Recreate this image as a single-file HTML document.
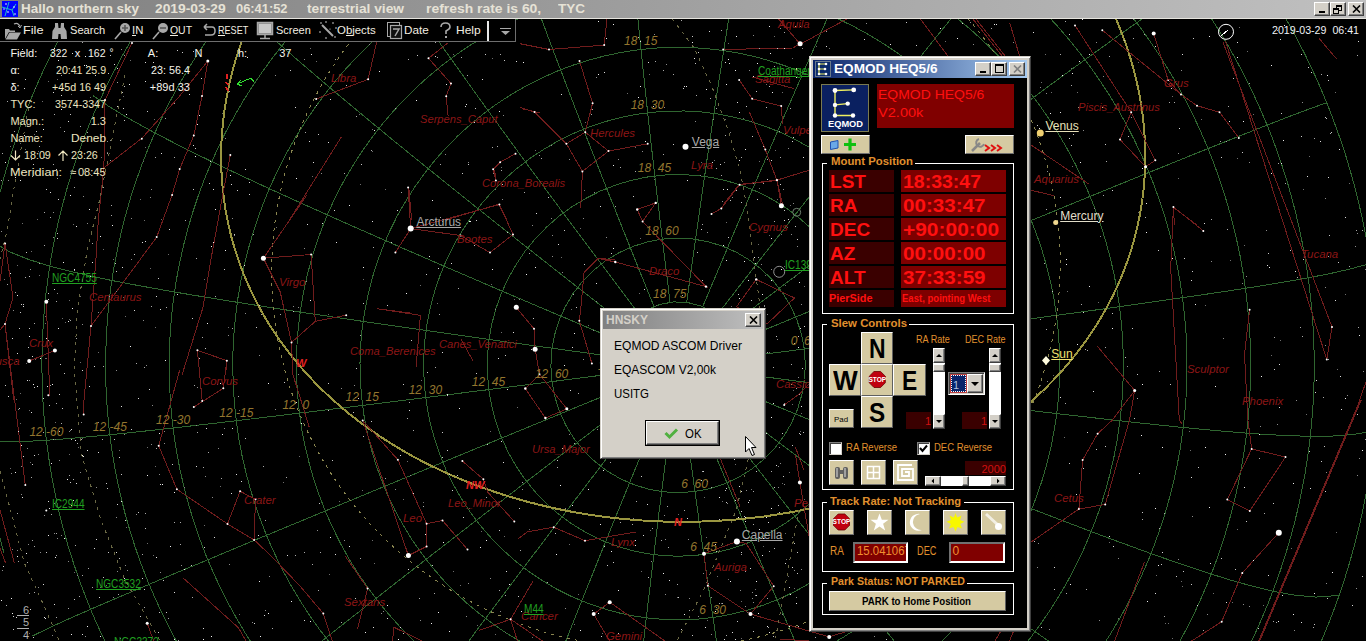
<!DOCTYPE html>
<html><head><meta charset="utf-8"><style>*{margin:0;padding:0;box-sizing:border-box}
html,body{width:1366px;height:641px;overflow:hidden;background:#000;font-family:"Liberation Sans",sans-serif}
.b{position:absolute}
.tx{position:absolute;white-space:pre;line-height:1;transform-origin:0 0}
.wb{position:absolute;background:#d4d0c8;border:1px solid;border-color:#fff #404040 #404040 #fff;box-shadow:inset -1px -1px 0 #808080,inset 1px 1px 0 #d4d0c8}
</style></head><body>
<svg class="b" style="left:0;top:0" width="1366" height="641" shape-rendering="crispEdges"><polyline points="741.2,357.2 741.5,370.9 738.8,384.4 733.3,397.0 725.2,408.1 715.0,417.2 703.0,423.9 689.8,427.9 676.1,429.0 662.4,427.0 649.5,422.2 638.0,414.7 628.3,404.9 620.9,393.3 616.3,380.3 614.5,366.6 615.7,352.9 619.9,339.8 626.8,327.8 636.0,317.6 647.3,309.7 660.0,304.4 673.5,301.9 687.2,302.4 700.5,305.9 712.8,312.1 723.4,320.7 732.0,331.5 738.0,343.9 741.2,357.2" fill="none" stroke="#2f6630" stroke-width="1" />
<polyline points="804.3,349.0 805.3,364.2 804.5,379.5 801.9,394.6 797.5,409.3 791.4,423.3 783.6,436.5 774.3,448.7 763.6,459.6 751.6,469.2 738.6,477.3 724.6,483.8 710.0,488.6 694.9,491.5 679.6,492.6 664.2,491.9 649.1,489.3 634.3,484.8 620.2,478.7 606.9,470.8 594.7,461.4 583.7,450.6 574.0,438.6 565.9,425.4 559.5,411.4 554.8,396.7 551.9,381.6 550.9,366.2 551.7,350.8 554.4,335.6 558.9,320.9 565.2,306.8 573.1,293.5 582.5,281.4 593.4,270.5 605.4,260.9 618.6,252.9 632.6,246.6 647.2,241.9 662.3,239.1 677.6,238.1 692.9,239.0 708.0,241.7 722.7,246.2 736.7,252.4 749.8,260.3 761.9,269.7 772.8,280.4 782.3,292.4 790.3,305.5 796.7,319.4 801.4,333.9 804.3,349.0" fill="none" stroke="#2f6630" stroke-width="1" />
<polyline points="867.3,340.7 868.8,356.7 868.8,372.8 867.5,388.9 864.8,404.8 860.9,420.4 855.6,435.6 849.0,450.3 841.2,464.4 832.3,477.9 822.2,490.5 811.1,502.2 799.1,513.0 786.2,522.7 772.4,531.3 758.0,538.7 743.1,544.8 727.6,549.7 711.8,553.2 695.7,555.4 679.5,556.2 663.3,555.7 647.2,553.7 631.2,550.4 615.7,545.7 600.5,539.8 586.0,532.5 572.0,524.0 558.9,514.4 546.6,503.7 535.3,492.0 525.0,479.3 515.9,465.9 507.9,451.7 501.1,436.8 495.7,421.4 491.6,405.7 488.8,389.6 487.4,373.3 487.4,357.0 488.8,340.8 491.6,324.8 495.8,309.0 501.2,293.7 508.0,278.8 516.0,264.7 525.1,251.2 535.4,238.6 546.7,227.0 558.9,216.3 572.0,206.7 585.9,198.3 600.4,191.0 615.5,185.1 631.0,180.4 646.8,177.1 662.9,175.1 679.1,174.5 695.2,175.3 711.2,177.4 727.0,180.9 742.4,185.7 757.3,191.7 771.7,199.1 785.4,207.5 798.3,217.2 810.4,227.8 821.5,239.5 831.6,252.0 840.6,265.4 848.5,279.4 855.1,294.1 860.5,309.2 864.6,324.8 867.3,340.7" fill="none" stroke="#2f6630" stroke-width="1" />
<polyline points="930.4,332.3 932.0,348.6 932.6,364.9 932.1,381.2 930.5,397.5 927.9,413.7 924.3,429.6 919.7,445.3 914.1,460.7 907.4,475.6 899.9,490.2 891.4,504.2 882.0,517.6 871.8,530.5 860.7,542.6 848.9,554.0 836.4,564.6 823.2,574.4 809.4,583.4 795.1,591.4 780.2,598.5 764.9,604.6 749.2,609.7 733.3,613.8 717.0,616.9 700.6,618.9 684.2,619.8 667.6,619.6 651.1,618.4 634.7,616.1 618.5,612.8 602.6,608.4 586.9,602.9 571.6,596.5 556.8,589.1 542.5,580.7 528.7,571.4 515.6,561.2 503.2,550.2 491.5,538.4 480.6,525.8 470.5,512.6 461.4,498.7 453.1,484.3 445.8,469.3 439.6,453.9 434.3,438.2 430.0,422.1 426.9,405.8 424.8,389.3 423.7,372.7 423.8,356.1 425.0,339.5 427.2,323.0 430.5,306.7 434.8,290.7 440.2,275.0 446.6,259.7 454.0,244.8 462.3,230.5 471.6,216.7 481.7,203.6 492.6,191.2 504.3,179.5 516.7,168.6 529.9,158.5 543.6,149.4 557.9,141.1 572.7,133.8 587.9,127.4 603.5,122.1 619.4,117.8 635.5,114.5 651.8,112.3 668.2,111.1 684.6,111.0 701.0,111.9 717.3,113.9 733.4,117.0 749.3,121.1 764.9,126.2 780.1,132.2 794.9,139.3 809.2,147.3 822.9,156.2 836.1,165.9 848.6,176.5 860.4,187.8 871.4,199.9 881.6,212.6 891.0,226.0 899.5,239.9 907.1,254.4 913.7,269.3 919.4,284.6 924.1,300.3 927.8,316.2 930.4,332.3" fill="none" stroke="#2f6630" stroke-width="1" />
<polyline points="993.5,323.9 995.2,340.4 996.1,357.0 996.1,373.6 995.2,390.2 993.5,406.7 990.9,423.1 987.5,439.4 983.2,455.4 978.0,471.3 972.1,486.8 965.3,502.0 957.8,516.9 949.5,531.3 940.4,545.3 930.6,558.8 920.1,571.8 909.0,584.2 897.2,596.0 884.7,607.2 871.8,617.7 858.2,627.6 844.2,636.7 829.7,645.1 814.7,652.7 799.4,659.5 783.7,665.5 767.7,670.6 751.5,674.9 735.0,678.4 718.4,680.9 701.6,682.6 684.8,683.4 667.9,683.3 651.1,682.3 634.3,680.4 617.7,677.7 601.2,674.0 584.9,669.5 568.8,664.1 553.1,657.9 537.7,650.8 522.7,642.9 508.2,634.3 494.1,624.8 480.5,614.6 467.5,603.8 455.1,592.2 443.3,580.0 432.2,567.1 421.8,553.7 412.1,539.8 403.2,525.3 395.0,510.4 387.7,495.1 381.2,479.4 375.5,463.4 370.7,447.1 366.8,430.5 363.7,413.8 361.6,396.9 360.4,380.0 360.0,363.0 360.6,346.1 362.1,329.1 364.5,312.3 367.8,295.7 371.9,279.2 376.9,263.0 382.8,247.2 389.5,231.6 397.0,216.4 405.4,201.7 414.5,187.4 424.3,173.7 434.8,160.4 446.0,147.8 457.9,135.8 470.4,124.5 483.4,113.8 497.0,103.8 511.1,94.6 525.7,86.2 540.7,78.5 556.0,71.6 571.7,65.6 587.7,60.4 603.9,56.1 620.3,52.6 636.8,50.0 653.5,48.2 670.2,47.4 686.9,47.4 703.6,48.3 720.2,50.1 736.7,52.7 753.0,56.2 769.1,60.6 785.0,65.8 800.5,71.8 815.7,78.6 830.6,86.2 845.0,94.6 858.9,103.7 872.3,113.5 885.2,124.0 897.5,135.1 909.3,146.9 920.4,159.3 930.8,172.2 940.5,185.6 949.5,199.6 957.8,214.0 965.3,228.8 972.1,243.9 978.0,259.4 983.1,275.2 987.4,291.2 990.9,307.5 993.5,323.9" fill="none" stroke="#2f6630" stroke-width="1" />
<polyline points="1056.5,315.3 1058.3,331.9 1059.4,348.5 1059.8,365.1 1059.4,381.8 1058.4,398.4 1056.6,415.0 1054.0,431.4 1050.8,447.8 1046.8,464.0 1042.2,480.0 1036.8,495.8 1030.8,511.4 1024.1,526.7 1016.7,541.6 1008.6,556.3 1000.0,570.6 990.7,584.5 980.7,598.0 970.3,611.1 959.2,623.6 947.6,635.7 935.4,647.3 922.8,658.4 909.7,668.9 896.1,678.8 882.0,688.1 867.6,696.7 852.8,704.8 837.7,712.2 822.2,718.9 806.4,724.9 790.4,730.2 774.1,734.8 757.7,738.7 741.0,741.9 724.3,744.3 707.4,746.0 690.5,746.9 673.5,747.1 656.5,746.5 639.6,745.2 622.7,743.1 606.0,740.2 589.3,736.6 572.9,732.3 556.6,727.2 540.5,721.4 524.8,714.9 509.3,707.7 494.2,699.8 479.4,691.3 465.0,682.0 451.0,672.2 437.5,661.7 424.5,650.6 411.9,639.0 399.9,626.7 388.5,614.0 377.6,600.8 367.4,587.0 357.7,572.9 348.7,558.3 340.4,543.3 332.8,527.9 325.8,512.3 319.6,496.3 314.0,480.0 309.3,463.6 305.2,446.9 301.9,430.1 299.4,413.1 297.7,396.1 296.7,379.0 296.4,361.8 297.0,344.7 298.3,327.6 300.4,310.6 303.2,293.8 306.8,277.0 311.1,260.5 316.2,244.1 322.0,228.1 328.4,212.3 335.6,196.8 343.5,181.6 352.1,166.9 361.3,152.5 371.1,138.6 381.5,125.1 392.5,112.1 404.1,99.7 416.2,87.7 428.8,76.3 441.9,65.5 455.4,55.3 469.4,45.7 483.8,36.8 498.6,28.5 513.7,20.9 529.1,13.9 544.8,7.7 560.8,2.1 576.9,-2.7 593.3,-6.8 609.8,-10.2 626.4,-12.8 643.2,-14.7 659.9,-15.9 676.8,-16.3 693.6,-16.0 710.3,-15.0 727.0,-13.2 743.6,-10.7 760.0,-7.4 776.3,-3.5 792.4,1.2 808.2,6.5 823.8,12.6 839.1,19.3 854.1,26.7 868.8,34.7 883.0,43.4 896.9,52.6 910.4,62.5 923.4,72.9 935.9,83.9 948.0,95.4 959.5,107.5 970.5,120.0 980.9,133.0 990.7,146.4 1000.0,160.2 1008.6,174.5 1016.6,189.0 1024.0,204.0 1030.7,219.2 1036.7,234.7 1042.1,250.4 1046.7,266.4 1050.7,282.6 1054.0,298.9 1056.5,315.3" fill="none" stroke="#2f6630" stroke-width="1" />
<polyline points="1119.5,306.6 1121.4,323.3 1122.7,340.0 1123.3,356.7 1123.3,373.5 1122.7,390.2 1121.5,406.9 1119.6,423.6 1117.1,440.2 1114.0,456.6 1110.2,473.0 1105.9,489.2 1100.9,505.3 1095.3,521.1 1089.1,536.7 1082.4,552.2 1075.0,567.3 1067.1,582.2 1058.6,596.7 1049.6,610.9 1040.1,624.8 1030.0,638.4 1019.4,651.5 1008.3,664.3 996.7,676.6 984.6,688.4 972.1,699.9 959.2,710.8 945.9,721.3 932.1,731.2 918.0,740.6 903.5,749.5 888.7,757.8 873.5,765.6 858.1,772.7 842.4,779.3 826.4,785.3 810.2,790.7 793.8,795.4 777.2,799.6 760.5,803.1 743.6,805.9 726.6,808.1 709.5,809.6 692.4,810.5 675.3,810.7 658.1,810.3 640.9,809.2 623.8,807.4 606.8,805.0 589.8,801.9 573.0,798.1 556.3,793.7 539.8,788.7 523.5,783.0 507.4,776.7 491.6,769.8 476.0,762.2 460.8,754.1 445.8,745.3 431.2,736.0 417.0,726.1 403.2,715.7 389.7,704.7 376.7,693.2 364.2,681.2 352.1,668.7 340.5,655.8 329.5,642.4 318.9,628.6 308.9,614.4 299.5,599.8 290.6,584.8 282.3,569.5 274.7,553.9 267.6,538.0 261.2,521.8 255.4,505.4 250.2,488.8 245.8,472.0 241.9,455.0 238.7,437.9 236.3,420.7 234.4,403.4 233.3,386.1 232.8,368.7 233.0,351.3 233.9,334.0 235.5,316.7 237.7,299.4 240.6,282.3 244.2,265.4 248.4,248.5 253.3,231.9 258.8,215.5 264.9,199.3 271.7,183.3 279.1,167.7 287.0,152.4 295.6,137.3 304.7,122.7 314.4,108.4 324.6,94.5 335.4,81.0 346.6,68.0 358.4,55.4 370.6,43.3 383.2,31.6 396.3,20.5 409.8,9.9 423.7,-0.2 438.0,-9.7 452.6,-18.7 467.5,-27.0 482.8,-34.8 498.3,-42.1 514.0,-48.6 530.0,-54.6 546.2,-60.0 562.6,-64.7 579.1,-68.8 595.8,-72.3 612.5,-75.1 629.4,-77.3 646.3,-78.8 663.3,-79.7 680.2,-80.0 697.2,-79.6 714.1,-78.5 730.9,-76.8 747.6,-74.5 764.3,-71.5 780.8,-68.0 797.1,-63.8 813.3,-58.9 829.3,-53.5 845.0,-47.5 860.5,-40.9 875.7,-33.7 890.7,-25.9 905.3,-17.6 919.6,-8.8 933.5,0.6 947.1,10.5 960.3,20.9 973.1,31.7 985.4,43.1 997.3,54.9 1008.8,67.1 1019.8,79.8 1030.3,92.8 1040.3,106.3 1049.8,120.1 1058.7,134.2 1067.1,148.7 1075.0,163.5 1082.3,178.5 1089.0,193.8 1095.2,209.4 1100.8,225.2 1105.7,241.2 1110.1,257.3 1113.9,273.6 1117.0,290.1 1119.5,306.6" fill="none" stroke="#2f6630" stroke-width="1" />
<polyline points="1182.5,297.7 1184.4,314.3 1185.9,330.9 1186.7,347.6 1187.0,364.3 1186.8,381.0 1186.0,397.7 1184.7,414.3 1182.8,430.9 1180.4,447.5 1177.4,463.9 1173.9,480.3 1169.8,496.6 1165.3,512.7 1160.2,528.6 1154.5,544.4 1148.4,560.0 1141.7,575.4 1134.5,590.6 1126.8,605.6 1118.6,620.3 1110.0,634.7 1100.8,648.8 1091.2,662.7 1081.1,676.2 1070.6,689.4 1059.7,702.2 1048.3,714.7 1036.5,726.8 1024.3,738.5 1011.7,749.8 998.7,760.7 985.3,771.2 971.6,781.2 957.6,790.8 943.2,799.9 928.5,808.5 913.6,816.6 898.3,824.2 882.8,831.4 867.1,838.0 851.1,844.1 835.0,849.6 818.6,854.6 802.0,859.0 785.4,862.9 768.5,866.3 751.6,869.0 734.5,871.2 717.4,872.8 700.2,873.9 683.0,874.3 665.7,874.2 648.5,873.5 631.3,872.2 614.1,870.3 597.0,867.8 579.9,864.8 563.0,861.2 546.2,856.9 529.5,852.2 513.0,846.8 496.6,840.9 480.5,834.4 464.6,827.4 448.9,819.8 433.5,811.7 418.4,803.1 403.5,793.9 389.0,784.2 374.8,774.1 361.0,763.4 347.5,752.3 334.4,740.7 321.7,728.7 309.4,716.2 297.6,703.3 286.2,690.0 275.3,676.4 264.8,662.3 254.8,647.9 245.3,633.2 236.4,618.1 227.9,602.7 220.0,587.1 212.7,571.2 205.8,555.0 199.6,538.6 193.9,522.0 188.8,505.3 184.3,488.3 180.3,471.2 177.0,454.0 174.2,436.7 172.0,419.3 170.5,401.8 169.5,384.3 169.2,366.8 169.4,349.3 170.3,331.8 171.7,314.4 173.8,297.0 176.4,279.7 179.7,262.5 183.5,245.5 187.9,228.6 192.9,211.9 198.4,195.3 204.5,179.0 211.2,162.9 218.4,147.0 226.1,131.4 234.4,116.1 243.1,101.1 252.4,86.4 262.2,72.0 272.4,58.0 283.1,44.4 294.3,31.1 305.9,18.3 317.9,5.8 330.3,-6.2 343.1,-17.8 356.3,-28.9 369.8,-39.6 383.7,-49.8 397.9,-59.5 412.4,-68.8 427.2,-77.5 442.3,-85.7 457.7,-93.4 473.2,-100.6 489.0,-107.2 505.0,-113.3 521.2,-118.8 537.5,-123.8 554.0,-128.3 570.6,-132.1 587.4,-135.5 604.2,-138.2 621.0,-140.4 638.0,-142.0 654.9,-143.1 671.9,-143.6 688.8,-143.5 705.8,-142.8 722.7,-141.6 739.5,-139.9 756.3,-137.6 772.9,-134.7 789.4,-131.3 805.8,-127.3 822.1,-122.8 838.2,-117.8 854.1,-112.2 869.8,-106.1 885.2,-99.5 900.5,-92.4 915.4,-84.8 930.2,-76.8 944.6,-68.2 958.7,-59.2 972.6,-49.7 986.1,-39.8 999.2,-29.5 1012.0,-18.7 1024.5,-7.5 1036.5,4.1 1048.2,16.1 1059.5,28.4 1070.3,41.1 1080.8,54.2 1090.8,67.5 1100.3,81.2 1109.4,95.2 1118.0,109.5 1126.2,124.1 1133.8,138.9 1141.0,154.0 1147.7,169.2 1153.9,184.7 1159.5,200.4 1164.7,216.3 1169.3,232.3 1173.4,248.5 1177.0,264.8 1180.0,281.2 1182.5,297.7" fill="none" stroke="#2f6630" stroke-width="1" />
<polyline points="1245.4,288.3 1247.4,304.8 1248.9,321.4 1250.0,338.0 1250.5,354.7 1250.6,371.4 1250.2,388.0 1249.3,404.7 1247.9,421.3 1246.0,437.9 1243.7,454.5 1240.8,470.9 1237.5,487.3 1233.7,503.6 1229.4,519.8 1224.7,535.9 1219.5,551.8 1213.8,567.6 1207.6,583.2 1201.0,598.6 1194.0,613.9 1186.4,628.9 1178.5,643.7 1170.1,658.3 1161.3,672.7 1152.0,686.8 1142.3,700.6 1132.2,714.1 1121.8,727.4 1110.9,740.3 1099.6,753.0 1087.9,765.3 1075.9,777.2 1063.5,788.8 1050.8,800.1 1037.7,811.0 1024.3,821.5 1010.6,831.6 996.6,841.3 982.2,850.6 967.6,859.4 952.7,867.8 937.6,875.8 922.2,883.4 906.6,890.5 890.7,897.1 874.7,903.2 858.4,908.9 842.0,914.1 825.4,918.7 808.6,922.9 791.7,926.6 774.7,929.8 757.6,932.5 740.4,934.6 723.1,936.2 705.8,937.3 688.4,937.9 671.0,938.0 653.6,937.5 636.2,936.5 618.8,934.9 601.5,932.8 584.2,930.2 567.0,927.1 549.8,923.4 532.8,919.2 515.9,914.5 499.1,909.3 482.5,903.5 466.1,897.3 449.8,890.5 433.8,883.2 417.9,875.4 402.3,867.2 387.0,858.4 371.9,849.2 357.1,839.5 342.6,829.4 328.4,818.8 314.6,807.7 301.1,796.3 287.9,784.4 275.1,772.1 262.7,759.4 250.7,746.3 239.0,732.9 227.9,719.0 217.1,704.9 206.8,690.4 196.9,675.6 187.5,660.5 178.5,645.1 170.1,629.4 162.1,613.5 154.7,597.3 147.7,580.9 141.2,564.3 135.3,547.5 129.9,530.5 125.0,513.4 120.7,496.1 116.9,478.7 113.6,461.2 110.9,443.6 108.8,425.9 107.2,408.2 106.1,390.5 105.6,372.7 105.7,354.9 106.3,337.1 107.4,319.4 109.1,301.7 111.3,284.1 114.1,266.6 117.5,249.2 121.3,231.9 125.7,214.7 130.6,197.7 136.1,180.9 142.0,164.2 148.5,147.8 155.5,131.5 162.9,115.5 170.8,99.8 179.2,84.3 188.1,69.1 197.5,54.2 207.2,39.6 217.4,25.3 228.1,11.3 239.1,-2.3 250.6,-15.5 262.4,-28.4 274.6,-40.9 287.2,-53.0 300.1,-64.8 313.4,-76.1 327.0,-87.0 340.9,-97.4 355.1,-107.4 369.6,-117.0 384.3,-126.1 399.3,-134.8 414.6,-143.0 430.0,-150.7 445.7,-158.0 461.6,-164.7 477.7,-171.0 493.9,-176.8 510.3,-182.1 526.8,-186.9 543.4,-191.2 560.1,-195.0 576.9,-198.2 593.8,-201.0 610.8,-203.3 627.8,-205.0 644.8,-206.3 661.8,-207.0 678.9,-207.2 695.9,-207.0 712.9,-206.2 729.8,-204.9 746.7,-203.1 763.5,-200.8 780.2,-198.1 796.8,-194.8 813.3,-191.0 829.7,-186.8 845.9,-182.1 861.9,-176.9 877.8,-171.3 893.5,-165.1 909.0,-158.6 924.3,-151.6 939.4,-144.1 954.2,-136.2 968.8,-127.9 983.1,-119.2 997.2,-110.1 1010.9,-100.5 1024.4,-90.6 1037.6,-80.3 1050.4,-69.6 1063.0,-58.5 1075.2,-47.1 1087.1,-35.3 1098.6,-23.2 1109.7,-10.8 1120.5,1.9 1130.9,15.0 1140.9,28.3 1150.5,41.9 1159.7,55.8 1168.5,69.9 1176.9,84.3 1184.9,99.0 1192.4,113.8 1199.5,128.9 1206.2,144.1 1212.4,159.6 1218.1,175.2 1223.4,191.0 1228.3,206.9 1232.6,222.9 1236.5,239.1 1240.0,255.4 1242.9,271.8 1245.4,288.3" fill="none" stroke="#2f6630" stroke-width="1" />
<polyline points="1308.2,277.8 1310.2,294.1 1311.9,310.4 1313.1,326.8 1313.9,343.2 1314.2,359.6 1314.2,376.1 1313.7,392.5 1312.8,409.0 1311.4,425.4 1309.7,441.8 1307.5,458.1 1304.9,474.4 1301.8,490.6 1298.4,506.7 1294.5,522.8 1290.2,538.8 1285.5,554.6 1280.4,570.4 1274.8,586.0 1268.9,601.5 1262.5,616.8 1255.8,632.0 1248.6,647.0 1241.0,661.8 1233.1,676.5 1224.7,690.9 1216.0,705.2 1206.9,719.2 1197.4,732.9 1187.6,746.5 1177.4,759.8 1166.8,772.8 1155.9,785.6 1144.6,798.1 1133.0,810.3 1121.0,822.2 1108.8,833.8 1096.2,845.0 1083.3,856.0 1070.1,866.6 1056.6,876.9 1042.8,886.8 1028.7,896.3 1014.4,905.5 999.8,914.4 984.9,922.8 969.9,930.8 954.5,938.5 939.0,945.7 923.2,952.6 907.3,959.0 891.2,964.9 874.8,970.5 858.4,975.6 841.7,980.3 824.9,984.5 808.0,988.3 791.0,991.6 773.8,994.4 756.6,996.8 739.3,998.7 721.9,1000.2 704.4,1001.1 686.9,1001.6 669.4,1001.6 651.9,1001.1 634.4,1000.1 616.8,998.7 599.3,996.7 581.9,994.3 564.4,991.4 547.1,988.0 529.8,984.1 512.7,979.7 495.6,974.9 478.7,969.5 461.8,963.7 445.2,957.4 428.7,950.7 412.4,943.5 396.3,935.8 380.4,927.6 364.7,919.0 349.2,910.0 334.0,900.5 319.0,890.6 304.4,880.2 290.0,869.4 275.9,858.3 262.1,846.7 248.6,834.7 235.5,822.3 222.7,809.6 210.3,796.5 198.2,783.0 186.6,769.2 175.3,755.1 164.4,740.6 154.0,725.9 143.9,710.8 134.3,695.5 125.1,679.8 116.4,664.0 108.1,647.8 100.3,631.5 92.9,614.9 86.1,598.1 79.7,581.1 73.8,564.0 68.3,546.7 63.4,529.2 59.0,511.6 55.1,493.9 51.7,476.1 48.8,458.2 46.4,440.3 44.5,422.2 43.1,404.2 42.3,386.1 41.9,368.0 42.1,349.9 42.8,331.9 44.0,313.8 45.7,295.9 48.0,278.0 50.7,260.1 53.9,242.4 57.6,224.8 61.9,207.3 66.6,189.9 71.8,172.8 77.4,155.7 83.6,138.9 90.2,122.2 97.3,105.8 104.8,89.6 112.8,73.6 121.2,57.8 130.0,42.3 139.2,27.1 148.9,12.2 159.0,-2.4 169.4,-16.8 180.3,-30.8 191.5,-44.5 203.0,-57.9 215.0,-70.9 227.2,-83.6 239.8,-95.9 252.8,-107.8 266.0,-119.4 279.5,-130.6 293.3,-141.4 307.4,-151.8 321.7,-161.7 336.3,-171.3 351.2,-180.5 366.2,-189.2 381.5,-197.5 396.9,-205.4 412.6,-212.9 428.4,-219.9 444.4,-226.4 460.6,-232.6 476.8,-238.2 493.2,-243.5 509.8,-248.2 526.4,-252.6 543.1,-256.4 559.9,-259.8 576.7,-262.8 593.6,-265.3 610.5,-267.3 627.5,-268.9 644.5,-270.0 661.4,-270.7 678.4,-270.9 695.4,-270.7 712.3,-270.0 729.1,-268.8 745.9,-267.3 762.7,-265.2 779.3,-262.8 795.9,-259.9 812.4,-256.5 828.7,-252.8 845.0,-248.6 861.1,-244.0 877.0,-239.0 892.9,-233.5 908.5,-227.7 924.0,-221.4 939.2,-214.8 954.3,-207.7 969.2,-200.3 983.9,-192.5 998.3,-184.4 1012.6,-175.8 1026.6,-166.9 1040.3,-157.7 1053.8,-148.1 1067.0,-138.1 1079.9,-127.8 1092.6,-117.2 1105.0,-106.3 1117.1,-95.1 1128.8,-83.6 1140.3,-71.7 1151.5,-59.6 1162.3,-47.2 1172.8,-34.6 1183.0,-21.7 1192.8,-8.5 1202.3,4.9 1211.4,18.6 1220.2,32.5 1228.6,46.6 1236.6,60.9 1244.3,75.4 1251.6,90.1 1258.5,105.0 1265.0,120.0 1271.2,135.2 1276.9,150.6 1282.2,166.1 1287.2,181.7 1291.7,197.5 1295.8,213.4 1299.5,229.3 1302.8,245.4 1305.7,261.6 1308.2,277.8" fill="none" stroke="#2f6630" stroke-width="1" />
<polyline points="1370.4,263.4 1372.5,279.0 1374.3,294.7 1375.7,310.5 1376.8,326.2 1377.5,342.1 1377.9,357.9 1377.8,373.7 1377.5,389.6 1376.8,405.4 1375.7,421.3 1374.2,437.1 1372.4,452.9 1370.3,468.7 1367.7,484.4 1364.8,500.1 1361.6,515.7 1358.0,531.3 1354.0,546.8 1349.7,562.3 1345.0,577.6 1340.0,592.9 1334.6,608.0 1328.8,623.0 1322.7,638.0 1316.3,652.8 1309.5,667.5 1302.3,682.0 1294.8,696.4 1287.0,710.6 1278.8,724.7 1270.3,738.6 1261.4,752.3 1252.2,765.8 1242.7,779.1 1232.8,792.3 1222.6,805.2 1212.1,817.9 1201.3,830.4 1190.2,842.6 1178.7,854.6 1167.0,866.3 1155.0,877.8 1142.6,889.0 1130.0,900.0 1117.1,910.6 1103.9,921.0 1090.4,931.1 1076.7,940.8 1062.7,950.3 1048.4,959.4 1033.9,968.2 1019.2,976.7 1004.2,984.8 989.0,992.6 973.5,1000.0 957.9,1007.1 942.0,1013.8 926.0,1020.1 909.7,1026.0 893.3,1031.5 876.7,1036.7 859.9,1041.4 843.0,1045.7 826.0,1049.6 808.8,1053.1 791.4,1056.2 774.0,1058.8 756.5,1061.0 738.8,1062.8 721.1,1064.1 703.3,1064.9 685.5,1065.4 667.6,1065.3 649.7,1064.8 631.7,1063.8 613.8,1062.4 595.8,1060.5 577.9,1058.1 559.9,1055.3 542.0,1052.0 524.2,1048.2 506.4,1044.0 488.8,1039.2 471.2,1034.0 453.7,1028.4 436.3,1022.2 419.0,1015.6 402.0,1008.5 385.0,1001.0 368.2,993.0 351.7,984.5 335.3,975.6 319.1,966.2 303.2,956.4 287.5,946.1 272.1,935.4 256.9,924.3 242.0,912.7 227.4,900.8 213.1,888.4" fill="none" stroke="#2f6630" stroke-width="1" />
<polyline points="3.9,552.9 -0.9,534.4 -5.3,515.8 -9.2,497.0 -12.5,478.2 -15.3,459.2 -17.7,440.3 -19.4,421.2 -20.7,402.2 -21.5,383.1 -21.7,364.1 -21.4,345.0 -20.6,326.0 -19.3,307.0 -17.4,288.1 -15.1,269.3 -12.2,250.6 -8.9,232.0 -5.1,213.5 -0.7,195.1 4.1,176.9 9.4,158.9 15.2,141.0 21.4,123.4 28.1,105.9 35.3,88.6 42.9,71.6 50.9,54.8 59.3,38.3 68.2,22.0 77.5,6.0 87.2,-9.7 97.2,-25.1 107.7,-40.3 118.5,-55.1 129.7,-69.6 141.2,-83.7 153.1,-97.6 165.3,-111.0 177.8,-124.2 190.6,-136.9 203.7,-149.3 217.1,-161.4 230.8,-173.1 244.7,-184.3 258.9,-195.2 273.3,-205.7 287.9,-215.8 302.8,-225.5 317.9,-234.9 333.1,-243.8 348.6,-252.2 364.2,-260.3 380.0,-268.0 395.9,-275.2 411.9,-282.1 428.1,-288.5 444.4,-294.5 460.8,-300.1 477.3,-305.2 493.9,-310.0 510.5,-314.3 527.2,-318.2 544.0,-321.7 560.8,-324.8 577.6,-327.4 594.5,-329.6 611.3,-331.5 628.2,-332.9 645.1,-333.9 661.9,-334.5 678.7,-334.6 695.5,-334.4 712.2,-333.8 728.9,-332.8 745.5,-331.4 762.0,-329.6 778.5,-327.4 794.8,-324.8 811.1,-321.8 827.3,-318.5 843.3,-314.8 859.2,-310.7 875.0,-306.3 890.7,-301.5 906.2,-296.3 921.6,-290.8 936.8,-285.0 951.8,-278.8 966.7,-272.3 981.4,-265.4 995.9,-258.2 1010.2,-250.7 1024.4,-242.9 1038.3,-234.7 1052.0,-226.3 1065.5,-217.5 1078.7,-208.5 1091.8,-199.1 1104.6,-189.5 1117.2,-179.6 1129.5,-169.4 1141.6,-159.0 1153.4,-148.3 1165.0,-137.3 1176.3,-126.1 1187.3,-114.7 1198.1,-103.0 1208.6,-91.1 1218.8,-78.9 1228.7,-66.6 1238.3,-54.0 1247.7,-41.2 1256.7,-28.2 1265.4,-15.0 1273.9,-1.7 1282.0,11.9 1289.8,25.6 1297.3,39.5 1304.5,53.5 1311.4,67.7 1318.0,82.1 1324.2,96.6 1330.1,111.2 1335.6,126.0 1340.9,140.8 1345.8,155.8 1350.3,170.9 1354.5,186.1 1358.4,201.4 1361.9,216.8 1365.1,232.2 1367.9,247.8 1370.4,263.4" fill="none" stroke="#2f6630" stroke-width="1" />
<polyline points="741.2,357.2 762.2,354.5 783.2,351.7 804.3,349.0 825.3,346.2 846.3,343.4 867.3,340.7 888.4,337.9 909.4,335.1 930.4,332.3 951.4,329.5 972.4,326.7 993.5,323.9 1014.5,321.0 1035.5,318.2 1056.5,315.3 1077.5,312.5 1098.5,309.6 1119.5,306.6 1140.5,303.7 1161.5,300.7 1182.5,297.7 1203.5,294.6 1224.5,291.5 1245.4,288.3 1266.4,285.0 1287.3,281.5 1308.2,277.8 1329.0,273.8 1349.8,269.1 1370.4,263.4" fill="none" stroke="#2f6630" stroke-width="1" />
<polyline points="741.2,373.8 762.2,376.5 783.2,379.3 804.2,382.1 825.3,384.8 846.3,387.5 867.3,390.2 888.4,392.9 909.4,395.5 930.4,398.2 951.5,400.8 972.5,403.4 993.6,406.0 1014.6,408.6 1035.7,411.1 1056.7,413.6 1077.8,416.0 1098.9,418.4 1120.0,420.8 1141.0,423.1 1162.1,425.3 1183.2,427.5 1204.3,429.5 1225.5,431.4 1246.6,433.1 1267.8,434.6 1289.0,435.7 1310.3,436.3 1331.7,436.1 1353.2,434.6 1374.9,430.5" fill="none" stroke="#2f6630" stroke-width="1" />
<polyline points="736.9,389.8 756.5,397.9 776.1,406.0 795.7,414.0 815.3,422.1 834.9,430.1 854.6,438.1 874.2,446.1 893.9,454.0 913.5,461.9 933.2,469.8 952.9,477.7 972.6,485.5 992.3,493.3 1012.1,501.1 1031.8,508.8 1051.6,516.4 1071.4,524.0 1091.3,531.6 1111.1,539.0 1131.0,546.3 1151.0,553.6 1171.0,560.6 1191.1,567.5 1211.3,574.1 1231.6,580.4 1252.1,586.1 1272.9,591.2 1294.1,595.1 1316.0,597.1 1339.1,595.4" fill="none" stroke="#2f6630" stroke-width="1" />
<polyline points="728.5,404.1 745.4,417.0 762.3,429.9 779.1,442.7 796.0,455.5 812.9,468.3 829.9,481.1 846.8,493.9 863.8,506.6 880.8,519.3 897.8,531.9 914.8,544.6 931.9,557.2 949.0,569.7 966.1,582.2 983.3,594.7 1000.5,607.1 1017.8,619.4 1035.1,631.7 1052.5,643.8 1069.9,655.9 1087.5,667.8 1105.2,679.5 1123.0,691.0 1141.1,702.3 1159.4,713.1 1178.1,723.4 1197.4,732.9 1217.6,741.2 1239.2,747.2 1263.6,748.9" fill="none" stroke="#2f6630" stroke-width="1" />
<polyline points="716.8,415.9 729.8,432.7 742.7,449.4 755.7,466.2 768.7,482.9 781.8,499.7 794.9,516.4 808.0,533.0 821.1,549.7 834.3,566.3 847.4,582.9 860.7,599.5 874.0,616.0 887.3,632.5 900.7,649.0 914.1,665.4 927.6,681.8 941.1,698.1 954.8,714.3 968.6,730.5 982.4,746.6 996.5,762.5 1010.7,778.3 1025.2,793.9 1039.9,809.2 1055.1,824.2 1070.9,838.6 1087.6,852.4 1105.6,864.9 1126.0,875.3 1150.9,881.6" fill="none" stroke="#2f6630" stroke-width="1" />
<polyline points="702.4,424.2 710.6,443.7 718.8,463.3 727.0,482.8 735.3,502.4 743.6,521.9 751.9,541.4 760.2,560.9 768.6,580.4 777.0,599.8 785.5,619.3 794.0,638.7 802.6,658.1 811.2,677.5 819.9,696.8 828.7,716.2 837.5,735.4 846.4,754.7 855.5,773.9 864.7,793.0 874.0,812.1 883.5,831.1 893.3,850.0 903.3,868.7 913.8,887.3 924.8,905.6 936.5,923.5 949.4,940.9 964.0,957.5 981.7,972.4 1005.4,984.2" fill="none" stroke="#2f6630" stroke-width="1" />
<polyline points="686.4,428.5 689.2,449.5 692.1,470.5 694.9,491.5 697.9,512.5 700.8,533.5 703.8,554.5 706.8,575.5 709.9,596.5 713.0,617.5 716.1,638.4 719.3,659.4 722.5,680.4 725.8,701.3 729.2,722.3 732.7,743.2 736.2,764.1 739.8,785.0 743.6,805.9 747.5,826.8 751.6,847.6 755.8,868.4 760.3,889.2 765.2,909.9 770.5,930.5 776.3,951.0 783.0,971.4 791.0,991.6 800.9,1011.3 814.3,1030.3 834.5,1047.7" fill="none" stroke="#2f6630" stroke-width="1" />
<polyline points="669.8,428.4 667.0,449.5 664.3,470.5 661.7,491.6 659.0,512.6 656.4,533.6 653.9,554.7 651.3,575.7 648.8,596.8 646.3,617.9 643.9,638.9 641.5,660.0 639.2,681.1 636.9,702.2 634.7,723.3 632.6,744.4 630.5,765.5 628.5,786.6 626.7,807.7 624.9,828.9 623.4,850.1 622.0,871.2 620.8,892.5 620.0,913.7 619.5,935.0 619.7,956.3 620.6,977.7 622.7,999.2 626.7,1020.9 634.0,1042.7 648.2,1064.7" fill="none" stroke="#2f6630" stroke-width="1" />
<polyline points="653.7,424.1 645.6,443.7 637.6,463.3 629.5,483.0 621.5,502.6 613.5,522.2 605.5,541.9 597.6,561.6 589.7,581.2 581.8,600.9 573.9,620.6 566.1,640.3 558.3,660.1 550.6,679.8 542.9,699.6 535.3,719.4 527.7,739.2 520.2,759.0 512.8,778.9 505.5,798.8 498.3,818.8 491.2,838.8 484.4,858.9 477.8,879.1 471.5,899.4 465.7,919.9 460.5,940.6 456.3,961.7 453.6,983.3 453.7,1005.9 459.5,1030.3" fill="none" stroke="#2f6630" stroke-width="1" />
<polyline points="639.3,415.8 626.4,432.6 613.5,449.5 600.7,466.3 587.8,483.2 574.9,500.1 562.1,516.9 549.3,533.8 536.5,550.7 523.7,567.7 511.0,584.6 498.2,601.6 485.5,618.6 472.9,635.5 460.2,652.6 447.6,669.6 435.0,686.7 422.5,703.8 410.0,721.0 397.6,738.2 385.3,755.4 373.1,772.8 361.0,790.2 349.0,807.7 337.3,825.4 325.8,843.3 314.8,861.6 304.4,880.2 295.0,899.6 287.4,920.2 283.6,943.5" fill="none" stroke="#2f6630" stroke-width="1" />
<polyline points="627.6,404.0 610.7,416.9 593.9,429.8 577.1,442.7 560.3,455.6 543.5,468.6 526.7,481.5 509.9,494.5 493.1,507.4 476.3,520.4 459.5,533.4 442.8,546.4 426.0,559.4 409.3,572.4 392.6,585.4 375.9,598.5 359.2,611.6 342.5,624.7 325.9,637.8 309.3,651.0 292.7,664.2 276.1,677.5 259.7,690.9 243.3,704.3 226.9,717.9 210.7,731.6 194.7,745.6 179.0,759.9 163.7,774.7 149.3,790.6 136.6,808.6" fill="none" stroke="#2f6630" stroke-width="1" />
<polyline points="619.3,389.6 599.7,397.7 580.1,405.7 560.5,413.8 540.9,421.9 521.2,430.0 501.6,438.1 482.0,446.1 462.4,454.2 442.8,462.3 423.2,470.4 403.6,478.5 384.0,486.6 364.4,494.7 344.9,502.8 325.3,510.9 305.7,519.1 286.1,527.2 266.5,535.3 246.9,543.4 227.3,551.6 207.8,559.8 188.2,567.9 168.6,576.1 149.1,584.4 129.6,592.6 110.1,600.9 90.6,609.3 71.2,617.8 51.8,626.6 32.7,635.9" fill="none" stroke="#2f6630" stroke-width="1" />
<polyline points="615.0,373.5 594.0,376.2 572.9,378.9 551.9,381.6 530.9,384.3 509.8,386.9 488.8,389.6 467.8,392.2 446.7,394.9 425.7,397.5 404.6,400.2 383.6,402.8 362.6,405.4 341.5,408.0 320.5,410.6 299.4,413.1 278.4,415.7 257.3,418.2 236.3,420.7 215.2,423.2 194.1,425.6 173.1,428.0 152.0,430.3 130.9,432.6 109.8,434.8 88.7,436.8 67.5,438.7 46.4,440.3 25.2,441.4 3.8,441.7 -17.7,440.3" fill="none" stroke="#2f6630" stroke-width="1" />
<polyline points="615.1,356.9 594.0,354.0 573.0,351.1 552.0,348.2 531.0,345.3 510.0,342.4 489.0,339.5 468.0,336.5 447.0,333.5 426.0,330.5 405.0,327.5 384.1,324.5 363.1,321.4 342.1,318.3 321.1,315.2 300.2,312.1 279.2,308.9 258.2,305.6 237.3,302.3 216.3,298.9 195.4,295.5 174.5,292.0 153.6,288.3 132.7,284.5 111.9,280.5 91.1,276.1 70.4,271.4 49.7,266.1 29.3,259.7 9.1,251.6 -10.4,239.7" fill="none" stroke="#2f6630" stroke-width="1" />
<polyline points="619.4,340.8 601.6,333.3 583.7,325.8 565.9,318.2 548.1,310.7 530.2,303.1 512.4,295.5 494.6,287.9 476.8,280.2 459.0,272.6 441.2,264.9 423.5,257.2 405.7,249.5 388.0,241.7 370.2,233.9 352.5,226.1 334.8,218.2 317.1,210.3 299.5,202.4 281.8,194.3 264.2,186.3 246.6,178.1 229.1,169.9 211.6,161.5 194.2,153.0 176.9,144.3 159.6,135.4 142.5,126.2 125.6,116.6 108.9,106.4 92.7,95.4" fill="none" stroke="#2f6630" stroke-width="1" />
<polyline points="627.8,326.4 611.1,313.4 594.3,300.4 577.6,287.3 560.9,274.2 544.3,261.1 527.6,248.0 511.0,234.8 494.4,221.7 477.8,208.5 461.2,195.2 444.7,181.9 428.1,168.6 411.7,155.3 395.2,141.9 378.8,128.4 362.5,114.9 346.2,101.4 329.9,87.7 313.8,73.9 297.7,60.1 281.7,46.1 265.9,31.9 250.3,17.5 234.9,2.8 219.9,-12.3 205.3,-28.0 191.5,-44.5 178.8,-62.4 168.3,-82.7 162.2,-107.7" fill="none" stroke="#2f6630" stroke-width="1" />
<polyline points="639.6,314.7 626.8,297.8 614.0,280.9 601.3,263.9 588.6,247.0 575.9,230.0 563.2,213.0 550.6,195.9 538.0,178.9 525.4,161.8 512.9,144.7 500.4,127.6 487.9,110.4 475.5,93.2 463.2,75.9 450.9,58.7 438.6,41.3 426.5,23.9 414.4,6.5 402.5,-11.1 390.7,-28.7 379.0,-46.5 367.6,-64.4 356.4,-82.5 345.6,-100.8 335.2,-119.5 325.6,-138.6 316.9,-158.5 309.9,-179.4 305.9,-202.2 307.8,-228.7" fill="none" stroke="#2f6630" stroke-width="1" />
<polyline points="654.0,306.5 646.0,286.8 638.1,267.2 630.2,247.5 622.3,227.8 614.5,208.1 606.6,188.4 598.9,168.7 591.1,148.9 583.4,129.2 575.7,109.4 568.1,89.6 560.6,69.8 553.0,50.0 545.6,30.1 538.2,10.2 530.9,-9.7 523.7,-29.7 516.7,-49.7 509.7,-69.7 502.9,-89.9 496.3,-110.0 490.0,-130.3 483.9,-150.7 478.3,-171.3 473.3,-192.0 469.0,-213.1 466.0,-234.5 464.8,-256.6 467.0,-279.7 475.9,-304.8" fill="none" stroke="#2f6630" stroke-width="1" />
<polyline points="670.1,302.3 667.5,281.2 664.9,260.2 662.3,239.1 659.8,218.1 657.3,197.0 654.8,175.9 652.4,154.9 650.0,133.8 647.7,112.7 645.4,91.6 643.2,70.5 641.0,49.4 638.8,28.3 636.8,7.2 634.8,-13.9 632.9,-35.0 631.1,-56.2 629.4,-77.3 627.8,-98.5 626.5,-119.7 625.3,-140.9 624.3,-162.1 623.7,-183.3 623.5,-204.6 623.9,-226.0 625.1,-247.4 627.5,-268.9 631.8,-290.5 639.4,-312.3 653.5,-334.2" fill="none" stroke="#2f6630" stroke-width="1" />
<polyline points="686.7,302.3 689.6,281.3 692.5,260.3 695.5,239.3 698.5,218.3 701.5,197.3 704.6,176.4 707.6,155.4 710.8,134.4 713.9,113.4 717.1,92.5 720.4,71.5 723.7,50.6 727.0,29.6 730.4,8.7 733.9,-12.2 737.5,-33.2 741.1,-54.1 744.9,-74.9 748.7,-95.8 752.8,-116.6 756.9,-137.5 761.4,-158.2 766.1,-179.0 771.2,-199.6 776.7,-220.2 783.1,-240.6 790.4,-260.9 799.4,-280.8 811.3,-300.1 828.6,-318.2" fill="none" stroke="#2f6630" stroke-width="1" />
<polyline points="702.7,306.7 710.9,287.2 719.2,267.6 727.4,248.1 735.7,228.6 744.1,209.1 752.4,189.6 760.8,170.1 769.2,150.6 777.6,131.2 786.1,111.7 794.6,92.3 803.1,72.9 811.7,53.5 820.3,34.1 829.0,14.7 837.7,-4.6 846.5,-23.9 855.4,-43.2 864.3,-62.4 873.4,-81.5 882.7,-100.7 892.1,-119.7 901.7,-138.6 911.6,-157.4 921.9,-176.1 932.7,-194.5 944.3,-212.5 957.1,-229.9 972.1,-246.3 991.1,-260.6" fill="none" stroke="#2f6630" stroke-width="1" />
<polyline points="717.0,315.0 730.0,298.3 743.0,281.5 756.0,264.8 769.1,248.1 782.1,231.4 795.2,214.7 808.3,198.0 821.4,181.3 834.5,164.6 847.6,148.0 860.8,131.4 874.0,114.7 887.2,98.2 900.4,81.6 913.7,65.0 927.0,48.5 940.3,32.0 953.7,15.6 967.2,-0.8 980.7,-17.1 994.3,-33.4 1008.1,-49.6 1021.9,-65.6 1036.0,-81.6 1050.2,-97.3 1064.8,-112.8 1079.9,-127.8 1095.8,-142.3 1112.9,-155.6 1132.5,-166.9" fill="none" stroke="#2f6630" stroke-width="1" />
<polyline points="728.7,326.8 745.6,314.0 762.4,301.1 779.3,288.3 796.2,275.5 813.1,262.7 830.0,249.9 846.9,237.1 863.9,224.3 880.8,211.5 897.7,198.8 914.7,186.0 931.6,173.3 948.6,160.6 965.6,147.9 982.6,135.2 999.6,122.5 1016.6,109.9 1033.7,97.3 1050.7,84.7 1067.8,72.2 1085.0,59.7 1102.2,47.3 1119.4,34.9 1136.8,22.7 1154.2,10.6 1171.8,-1.3 1189.6,-12.9 1207.7,-24.1 1226.4,-34.4 1246.1,-43.3" fill="none" stroke="#2f6630" stroke-width="1" />
<polyline points="736.9,341.2 756.5,333.1 776.2,325.1 795.8,317.0 815.4,308.9 835.0,300.9 854.6,292.8 874.2,284.8 893.9,276.7 913.5,268.7 933.1,260.6 952.7,252.6 972.3,244.6 992.0,236.5 1011.6,228.5 1031.2,220.5 1050.8,212.5 1070.5,204.4 1090.1,196.4 1109.7,188.4 1129.4,180.4 1149.0,172.4 1168.7,164.5 1188.3,156.5 1208.0,148.6 1227.7,140.7 1247.4,132.9 1267.1,125.1 1286.9,117.4 1306.7,109.9 1326.7,102.7" fill="none" stroke="#2f6630" stroke-width="1" />
<polyline points="676.6,521.8 678.8,521.8 681.1,521.8 683.4,521.8 685.7,521.8 688.0,521.8 690.2,521.8 692.5,521.7 694.8,521.7 697.1,521.6 699.3,521.6 701.6,521.5 703.9,521.4 706.2,521.4 708.5,521.3 710.7,521.2 713.0,521.1 715.3,520.9 717.6,520.8 719.8,520.7 722.1,520.5 724.4,520.4 726.7,520.2 728.9,520.1 731.2,519.9 733.5,519.7 735.7,519.5 738.0,519.3 740.3,519.1 742.6,518.9 744.8,518.7 747.1,518.4 749.4,518.2 751.6,518.0 753.9,517.7 756.2,517.4 758.4,517.1 760.7,516.9 763.0,516.6 765.2,516.3 767.5,516.0 769.8,515.6 772.0,515.3 774.3,515.0 776.6,514.6 778.8,514.3 781.1,513.9 783.3,513.5 785.6,513.2 787.8,512.8 790.1,512.4 792.4,512.0 794.6,511.6 796.9,511.1 799.1,510.7 801.4,510.3 803.6,509.8 805.9,509.3 808.1,508.9 810.4,508.4 812.6,507.9 814.8,507.4 817.1,506.9 819.3,506.4 821.6,505.9 823.8,505.3 826.0,504.8 828.3,504.3 830.5,503.7 832.7,503.1 835.0,502.5 837.2,502.0 839.4,501.4 841.6,500.8 843.9,500.1 846.1,499.5 848.3,498.9 850.5,498.2 852.8,497.6 855.0,496.9 857.2,496.3 859.4,495.6 861.6,494.9 863.8,494.2 866.0,493.5 868.2,492.8 870.4,492.0 872.6,491.3 874.8,490.5 877.0,489.8 879.2,489.0 881.4,488.2 883.6,487.4 885.8,486.6 888.0,485.8 890.1,485.0 892.3,484.2 894.5,483.3 896.7,482.5 898.8,481.6 901.0,480.8 903.2,479.9 905.3,479.0 907.5,478.1 909.7,477.2 911.8,476.2 914.0,475.3 916.1,474.4 918.3,473.4 920.4,472.4 922.6,471.5 924.7,470.5 926.8,469.5 929.0,468.5 931.1,467.4 933.2,466.4 935.3,465.4 937.5,464.3 939.6,463.2 941.7,462.2 943.8,461.1 945.9,460.0 948.0,458.9 950.1,457.7 952.2,456.6 954.3,455.5 956.4,454.3 958.5,453.1 960.5,451.9 962.6,450.7 964.7,449.5 966.7,448.3 968.8,447.1 970.9,445.8 972.9,444.6 975.0,443.3 977.0,442.0 979.0,440.7 981.1,439.4 983.1,438.1 985.1,436.8 987.2,435.4 989.2,434.1 991.2,432.7 993.2,431.3 995.2,429.9 997.2,428.5 999.2,427.1 1001.1,425.6 1003.1,424.2 1005.1,422.7 1007.1,421.2 1009.0,419.7 1011.0,418.2 1012.9,416.7 1014.9,415.2 1016.8,413.6 1018.7,412.1 1020.6,410.5 1022.6,408.9 1024.5,407.3 1026.4,405.7 1028.3,404.0 1030.2,402.4 1032.0,400.7 1033.9,399.0 1035.8,397.3 1037.6,395.6 1039.5,393.9 1041.3,392.1 1043.2,390.4 1045.0,388.6 1046.8,386.8 1048.6,385.0 1050.4,383.1 1052.2,381.3 1054.0,379.4 1055.8,377.6 1057.5,375.7 1059.3,373.7 1061.0,371.8 1062.8,369.9 1064.5,367.9 1066.2,365.9 1067.9,363.9 1069.6,361.9 1071.3,359.9 1072.9,357.8 1074.6,355.8 1076.3,353.7 1077.9,351.6 1079.5,349.4 1081.1,347.3 1082.7,345.1 1084.3,342.9 1085.9,340.7 1087.5,338.5 1089.0,336.3 1090.6,334.0 1092.1,331.7 1093.6,329.4 1095.1,327.1 1096.6,324.7 1098.1,322.4 1099.5,320.0 1101.0,317.6 1102.4,315.2 1103.8,312.7 1105.2,310.2 1106.6,307.8 1107.9,305.2 1109.3,302.7 1110.6,300.1 1111.9,297.6 1113.2,295.0 1114.5,292.3 1115.7,289.7 1116.9,287.0 1118.2,284.3 1119.4,281.6 1120.5,278.8 1121.7,276.1 1122.8,273.3 1123.9,270.5 1125.0,267.6 1126.1,264.8 1127.1,261.9 1128.2,259.0 1129.1,256.0 1130.1,253.1 1131.1,250.1 1132.0,247.0 1132.9,244.0 1133.8,240.9 1134.6,237.8 1135.4,234.7 1136.2,231.6 1137.0,228.4 1137.7,225.2 1138.4,221.9 1139.1,218.7 1139.7,215.4 1140.3,212.1 1140.9,208.7 1141.5,205.4 1142.0,202.0 1142.5,198.5 1142.9,195.1 1143.3,191.6 1143.7,188.1 1144.0,184.5 1144.3,181.0 1144.6,177.4 1144.8,173.7 1145.0,170.1 1145.1,166.4 1145.2,162.6 1145.2,158.9 1145.2,155.1 1145.2,151.3 1145.1,147.5 1145.0,143.6 1144.8,139.7 1144.6,135.7 1144.3,131.8 1144.0,127.8 1143.6,123.8 1143.2,119.7 1142.7,115.6 1142.2,111.5 1141.6,107.4 1140.9,103.2 1140.2,99.0 1139.4,94.8 1138.6,90.5 1137.7,86.2 1136.7,81.9 1135.7,77.5 1134.6,73.2 1133.4,68.8 1132.2,64.3 1130.9,59.9 1129.5,55.4 1128.1,50.9 1126.6,46.3 1125.0,41.8 1123.3,37.2 1121.6,32.6 1119.7,28.0 1117.8,23.3 1115.8,18.6 1113.7,13.9 1111.6,9.2 1109.3,4.5 1107.0,-0.3 1104.5,-5.1 1102.0,-9.8 1099.4,-14.6 1096.6,-19.5 1093.8,-24.3 1090.9,-29.1 1087.9,-34.0 1084.8,-38.8 1081.5,-43.7 1078.2,-48.6 1074.8,-53.4 1071.2,-58.3 1067.6,-63.2 1063.8,-68.0 1059.9,-72.9 1055.9,-77.8 1051.8,-82.6 1047.6,-87.4 1043.3,-92.3 1038.8,-97.1 1034.2,-101.8 1029.5,-106.6 1024.7,-111.3 1019.8,-116.1 1014.7,-120.7 1009.5,-125.4 1004.2,-130.0 998.8,-134.6 993.2,-139.1 987.6,-143.6 981.7,-148.0 975.8,-152.4 969.8,-156.8 963.6,-161.0 957.3,-165.2 950.9,-169.4 944.3,-173.5 937.6,-177.5 930.8,-181.4 923.9,-185.2 916.9,-189.0 909.8,-192.6 902.5,-196.2 895.1,-199.7 887.7,-203.1 880.1,-206.3 872.4,-209.5 864.6,-212.6 856.7,-215.5 848.7,-218.3 840.7,-221.0 832.5,-223.6 824.2,-226.1 815.9,-228.4 807.5,-230.6 799.0,-232.6 790.5,-234.5 781.9,-236.3 773.2,-237.9 764.5,-239.4 755.7,-240.7 746.9,-241.9 738.0,-243.0 729.1,-243.8 720.2,-244.5 711.3,-245.1 702.3,-245.5 693.3,-245.8 684.4,-245.9 675.4,-245.8 666.4,-245.6 657.4,-245.2 648.5,-244.7 639.6,-244.0 630.7,-243.2 621.8,-242.2 613.0,-241.0 604.2,-239.7 595.4,-238.3 586.7,-236.7 578.1,-234.9 569.5,-233.0 561.0,-231.0 552.6,-228.9 544.3,-226.6 536.0,-224.1 527.8,-221.6 519.7,-218.9 511.7,-216.1 503.8,-213.2 495.9,-210.1 488.2,-207.0 480.6,-203.7 473.1,-200.4 465.7,-196.9 458.4,-193.3 451.2,-189.7 444.2,-185.9 437.2,-182.1 430.4,-178.2 423.7,-174.2 417.1,-170.1 410.6,-166.0 404.3,-161.8 398.1,-157.5 392.0,-153.2 386.0,-148.8 380.2,-144.4 374.5,-139.9 368.9,-135.4 363.4,-130.8 358.1,-126.2 352.8,-121.5 347.7,-116.8 342.8,-112.1 337.9,-107.3 333.2,-102.6 328.6,-97.8 324.1,-93.0 319.7,-88.1 315.5,-83.3 311.3,-78.4 307.3,-73.6 303.4,-68.7 299.6,-63.8 295.9,-58.9 292.3,-54.0 288.9,-49.2 285.5,-44.3 282.3,-39.4 279.1,-34.5 276.1,-29.7 273.1,-24.8 270.3,-20.0 267.5,-15.1 264.9,-10.3 262.3,-5.5 259.9,-0.7 257.5,4.0 255.2,8.8 253.1,13.5 250.9,18.2 248.9,22.9 247.0,27.6 245.1,32.3 243.4,36.9 241.7,41.5 240.1,46.1 238.5,50.6 237.1,55.1 235.7,59.6 234.4,64.1 233.1,68.6 232.0,73.0 230.9,77.4 229.8,81.7 228.9,86.1 228.0,90.4 227.1,94.7 226.3,98.9 225.6,103.1 224.9,107.3 224.3,111.5 223.8,115.6 223.3,119.7 222.8,123.8 222.5,127.8 222.1,131.8 221.8,135.8 221.6,139.7 221.4,143.6 221.3,147.5 221.2,151.4 221.2,155.2 221.2,159.0 221.2,162.8 221.3,166.5 221.4,170.2 221.6,173.9 221.8,177.5 222.1,181.1 222.4,184.7 222.7,188.3 223.1,191.8 223.5,195.3 223.9,198.8 224.4,202.2 224.9,205.6 225.4,209.0 226.0,212.4 226.6,215.7 227.3,219.0 227.9,222.3 228.6,225.5 229.4,228.7 230.1,231.9 230.9,235.1 231.7,238.2 232.6,241.3 233.5,244.4 234.4,247.4 235.3,250.4 236.2,253.4 237.2,256.4 238.2,259.4 239.2,262.3 240.3,265.2 241.3,268.1 242.4,270.9 243.5,273.7 244.7,276.5 245.8,279.3 247.0,282.1 248.2,284.8 249.4,287.5 250.7,290.2 251.9,292.8 253.2,295.4 254.5,298.1 255.8,300.6 257.1,303.2 258.5,305.7 259.8,308.3 261.2,310.8 262.6,313.2 264.0,315.7 265.4,318.1 266.9,320.5 268.3,322.9 269.8,325.3 271.3,327.6 272.8,330.0 274.3,332.3 275.8,334.5 277.4,336.8 278.9,339.1 280.5,341.3 282.1,343.5 283.7,345.7 285.3,347.8 286.9,350.0 288.5,352.1 290.2,354.2 291.8,356.3 293.5,358.4 295.2,360.5 296.9,362.5 298.6,364.5 300.3,366.5 302.0,368.5 303.7,370.5 305.4,372.4 307.2,374.3 309.0,376.2 310.7,378.1 312.5,380.0 314.3,381.9 316.1,383.7 317.9,385.6 319.7,387.4 321.5,389.2 323.3,390.9 325.2,392.7 327.0,394.4 328.9,396.2 330.7,397.9 332.6,399.6 334.5,401.3 336.4,402.9 338.3,404.6 340.1,406.2 342.1,407.9 344.0,409.5 345.9,411.1 347.8,412.6 349.7,414.2 351.7,415.8 353.6,417.3 355.6,418.8 357.5,420.3 359.5,421.8 361.5,423.3 363.4,424.8 365.4,426.2 367.4,427.6 369.4,429.1 371.4,430.5 373.4,431.9 375.4,433.3 377.4,434.6 379.4,436.0 381.4,437.3 383.5,438.7 385.5,440.0 387.5,441.3 389.6,442.6 391.6,443.9 393.7,445.1 395.7,446.4 397.8,447.6 399.9,448.9 401.9,450.1 404.0,451.3 406.1,452.5 408.2,453.6 410.2,454.8 412.3,456.0 414.4,457.1 416.5,458.3 418.6,459.4 420.7,460.5 422.8,461.6 424.9,462.7 427.1,463.7 429.2,464.8 431.3,465.9 433.4,466.9 435.6,467.9 437.7,468.9 439.8,470.0 442.0,470.9 444.1,471.9 446.2,472.9 448.4,473.9 450.5,474.8 452.7,475.8 454.9,476.7 457.0,477.6 459.2,478.5 461.3,479.4 463.5,480.3 465.7,481.2 467.8,482.1 470.0,482.9 472.2,483.8 474.4,484.6 476.6,485.4 478.7,486.2 480.9,487.0 483.1,487.8 485.3,488.6 487.5,489.4 489.7,490.2 491.9,490.9 494.1,491.7 496.3,492.4 498.5,493.1 500.7,493.8 502.9,494.6 505.1,495.3 507.3,495.9 509.5,496.6 511.8,497.3 514.0,497.9 516.2,498.6 518.4,499.2 520.6,499.9 522.9,500.5 525.1,501.1 527.3,501.7 529.5,502.3 531.8,502.9 534.0,503.4 536.2,504.0 538.5,504.6 540.7,505.1 542.9,505.6 545.2,506.2 547.4,506.7 549.7,507.2 551.9,507.7 554.2,508.2 556.4,508.7 558.6,509.1 560.9,509.6 563.1,510.1 565.4,510.5 567.6,510.9 569.9,511.4 572.2,511.8 574.4,512.2 576.7,512.6 578.9,513.0 581.2,513.4 583.4,513.8 585.7,514.1 588.0,514.5 590.2,514.8 592.5,515.2 594.7,515.5 597.0,515.8 599.3,516.1 601.5,516.4 603.8,516.7 606.1,517.0 608.3,517.3 610.6,517.6 612.9,517.8 615.1,518.1 617.4,518.3 619.7,518.6 621.9,518.8 624.2,519.0 626.5,519.2 628.8,519.4 631.0,519.6 633.3,519.8 635.6,520.0 637.9,520.2 640.1,520.3 642.4,520.5 644.7,520.6 647.0,520.8 649.2,520.9 651.5,521.0 653.8,521.1 656.1,521.2 658.3,521.3 660.6,521.4 662.9,521.5 665.2,521.6 667.4,521.6 669.7,521.7 672.0,521.7 674.3,521.7 676.6,521.8" fill="none" stroke="#9a9640" stroke-width="2" />
<polyline points="1056.5,315.3 1055.6,321.5 1054.5,327.7 1053.4,333.8 1052.2,339.8 1050.9,345.8 1049.4,351.8 1047.9,357.7 1046.3,363.6 1044.6,369.4 1042.9,375.2 1041.0,380.9 1039.1,386.6 1037.0,392.3 1034.9,397.8 1032.7,403.4 1030.4,408.9 1028.1,414.3 1025.6,419.7 1023.1,425.0 1020.5,430.2 1017.9,435.5 1015.2,440.6 1012.4,445.7 1009.5,450.8 1006.6,455.7 1003.5,460.7 1000.5,465.5 997.3,470.4 994.1,475.1 990.9,479.8 987.5,484.5 984.2,489.0 980.7,493.5 977.2,498.0 973.7,502.4 970.0,506.7 966.4,511.0 962.6,515.2 958.9,519.4 955.0,523.5 951.2,527.5 947.2,531.5 943.2,535.4 939.2,539.2 935.1,543.0 931.0,546.7 926.9,550.3 922.6,553.9 918.4,557.4 914.1,560.9 909.8,564.3 905.4,567.6 901.0,570.9 896.5,574.1 892.0,577.2 887.5,580.3 882.9,583.3 878.3,586.2 873.7,589.1 869.0,591.9 864.3,594.7 859.6,597.3 854.8,599.9 850.0,602.5 845.2,605.0 840.3,607.4 835.4,609.7 830.5,612.0 825.6,614.2 820.6,616.4 815.6,618.4 810.6,620.4 805.6,622.4 800.5,624.3 795.4,626.1 790.3,627.8 785.2,629.5 780.1,631.1 774.9,632.6 769.7,634.1 764.5,635.5 759.3,636.8 754.1,638.1 748.8,639.3 743.6,640.4 738.3,641.5 733.0,642.4 727.7,643.4 722.4,644.2 717.1,645.0 711.8,645.7 706.4,646.3 701.1,646.9 695.7,647.4 690.3,647.8 685.0,648.2 679.6,648.5 674.2,648.7 668.8,648.8 663.4,648.9 658.0,648.9 652.6,648.8 647.2,648.7 641.8,648.5 636.4,648.2 631.0,647.8 625.6,647.4 620.2,646.9 614.8,646.3 609.4,645.7 604.0,645.0 598.6,644.2 593.3,643.3 587.9,642.4 582.5,641.4 577.2,640.3 571.9,639.2 566.5,637.9 561.2,636.6 555.9,635.2 550.6,633.8 545.3,632.3 540.0,630.7 534.8,629.0 529.6,627.2 524.3,625.4 519.1,623.5 514.0,621.5 508.8,619.5 503.7,617.3 498.5,615.1 493.5,612.9 488.4,610.5 483.3,608.1 478.3,605.6 473.3,603.0 468.4,600.3 463.4,597.6 458.5,594.8 453.7,591.9 448.8,588.9 444.0,585.8 439.2,582.7 434.5,579.5 429.8,576.2 425.1,572.9 420.5,569.5 415.9,565.9 411.4,562.4 406.9,558.7 402.5,554.9 398.1,551.1 393.7,547.2 389.4,543.2 385.1,539.2 380.9,535.1 376.8,530.8 372.7,526.6 368.6,522.2 364.6,517.7 360.7,513.2 356.9,508.6 353.0,504.0 349.3,499.2 345.6,494.4 342.0,489.5 338.5,484.5 335.0,479.5 331.6,474.3 328.3,469.1 325.0,463.9 321.8,458.5 318.7,453.1 315.7,447.6 312.8,442.0 309.9,436.4 307.2,430.7 304.5,424.9 301.9,419.0 299.4,413.1 297.0,407.1 294.7,401.1 292.5,395.0 290.4,388.8 288.4,382.5 286.5,376.2 284.7,369.8 283.0,363.4 281.4,356.9 279.9,350.4 278.5,343.8 277.3,337.1 276.2,330.4 275.1,323.6 274.3,316.8 273.5,309.9 272.9,303.0 272.3,296.0 272.0,289.0 271.7,281.9 271.6,274.8 271.6,267.7 271.8,260.5 272.1,253.3 272.5,246.1 273.1,238.8 273.8,231.6 274.7,224.3 275.8,216.9 276.9,209.6 278.3,202.2 279.7,194.9 281.4,187.5 283.2,180.1 285.1,172.7 287.3,165.3 289.5,158.0 292.0,150.6 294.6,143.2 297.4,135.9 300.3,128.6 303.4,121.3 306.7,114.0 310.1,106.8 313.7,99.6 317.5,92.5 321.4,85.4 325.5,78.3 329.8,71.3 334.3,64.4 338.9,57.5 343.7,50.7 348.6,44.0 353.7,37.3 359.0,30.7 364.5,24.2 370.1,17.8 375.9,11.5 381.8,5.3 387.9,-0.8 394.1,-6.7 400.5,-12.6 407.1,-18.3 413.8,-24.0 420.6,-29.4 427.6,-34.8 434.7,-40.0 442.0,-45.1 449.4,-50.0 456.9,-54.8 464.5,-59.4 472.3,-63.9 480.2,-68.1 488.2,-72.3 496.2,-76.2 504.4,-80.0 512.7,-83.6 521.1,-87.0 529.6,-90.3 538.1,-93.3 546.8,-96.2 555.5,-98.8 564.2,-101.3 573.0,-103.6 581.9,-105.7 590.8,-107.5 599.8,-109.2 608.8,-110.7 617.8,-112.0 626.9,-113.0 635.9,-113.9 645.0,-114.6 654.1,-115.0 663.2,-115.3 672.2,-115.3 681.3,-115.2 690.3,-114.8 699.3,-114.3 708.3,-113.5 717.3,-112.6 726.2,-111.4 735.0,-110.1 743.8,-108.5 752.5,-106.8 761.2,-104.9 769.8,-102.8 778.4,-100.5 786.8,-98.1 795.2,-95.4 803.5,-92.6 811.7,-89.6 819.7,-86.5 827.7,-83.1 835.6,-79.7 843.4,-76.0 851.1,-72.2 858.6,-68.3 866.1,-64.2 873.4,-60.0 880.6,-55.7 887.6,-51.2 894.6,-46.5 901.4,-41.8 908.0,-36.9 914.6,-32.0 920.9,-26.9 927.2,-21.7 933.3,-16.4 939.3,-10.9 945.1,-5.4 950.8,0.1 956.3,5.8 961.7,11.6 967.0,17.4 972.0,23.3 977.0,29.3 981.8,35.4 986.4,41.5 990.9,47.7 995.3,53.9 999.5,60.2 1003.5,66.6 1007.5,73.0 1011.2,79.4 1014.8,85.8 1018.3,92.3 1021.6,98.9 1024.8,105.4 1027.8,112.0 1030.7,118.6 1033.4,125.3 1036.0,131.9 1038.5,138.6 1040.8,145.3 1043.0,151.9 1045.0,158.6 1047.0,165.3 1048.7,172.0 1050.4,178.7 1051.9,185.4 1053.3,192.1 1054.5,198.8 1055.6,205.4 1056.6,212.1 1057.5,218.7 1058.2,225.3 1058.9,231.9 1059.4,238.5 1059.7,245.1 1060.0,251.6 1060.1,258.1 1060.2,264.6 1060.1,271.1 1059.9,277.5 1059.6,283.9 1059.2,290.2 1058.7,296.6 1058.1,302.9 1057.3,309.1 1056.5,315.3" fill="none" stroke="#8a8650" stroke-width="1" stroke-dasharray="3 5"/>
<polyline points="132.0,43.0 105.0,100.0 103.9,167.8 98.3,220.0 96.0,258.0 91.0,326.0 84.0,400.0" fill="none" stroke="#701c1c" stroke-width="1" />
<polyline points="207.8,61.1 178.3,97.6 141.8,138.3 103.9,167.8" fill="none" stroke="#701c1c" stroke-width="1" />
<polyline points="91.0,326.0 156.7,237.1 172.1,195.0 179.7,169.0 193.8,135.5 202.0,96.0 207.8,61.1" fill="none" stroke="#701c1c" stroke-width="1" />
<polyline points="230.3,155.1 222.7,195.0 211.4,256.8 203.0,307.3 182.0,375.0" fill="none" stroke="#701c1c" stroke-width="1" />
<polyline points="5.1,243.5 0.0,281.0" fill="none" stroke="#701c1c" stroke-width="1" />
<polyline points="5.1,243.5 13.0,298.0 5.0,324.0 0.0,330.0" fill="none" stroke="#701c1c" stroke-width="1" />
<polyline points="5.0,324.0 13.7,400.0" fill="none" stroke="#701c1c" stroke-width="1" />
<polyline points="46.3,301.8 49.8,396.2" fill="none" stroke="#701c1c" stroke-width="1" />
<polyline points="29.2,360.9 54.9,350.6" fill="none" stroke="#701c1c" stroke-width="1" />
<polyline points="380.0,19.0 376.5,42.8 368.1,79.3 316.2,99.0" fill="none" stroke="#701c1c" stroke-width="1" />
<polyline points="341.4,136.9 289.5,220.0" fill="none" stroke="#701c1c" stroke-width="1" />
<polyline points="448.1,42.8 428.5,58.3 451.0,83.5 446.2,96.2 448.1,115.8" fill="none" stroke="#701c1c" stroke-width="1" />
<polyline points="522.6,108.8 540.0,113.0" fill="none" stroke="#701c1c" stroke-width="1" />
<polyline points="515.5,153.7 500.1,162.2 493.1,169.2 495.9,180.4" fill="none" stroke="#701c1c" stroke-width="1" />
<polyline points="408.8,187.4 411.6,220.0" fill="none" stroke="#701c1c" stroke-width="1" />
<polyline points="445.3,220.0 498.7,204.3 507.1,220.0" fill="none" stroke="#701c1c" stroke-width="1" />
<polyline points="607.0,19.0 604.2,45.1 549.0,49.5 520.0,43.7" fill="none" stroke="#701c1c" stroke-width="1" />
<polyline points="579.5,61.1 592.6,103.2 585.3,132.2 608.5,151.1 647.7,143.8" fill="none" stroke="#701c1c" stroke-width="1" />
<polyline points="585.3,132.2 566.4,143.8 534.5,111.9 520.0,107.5" fill="none" stroke="#701c1c" stroke-width="1" />
<polyline points="566.4,143.8 582.4,171.4 608.5,151.1" fill="none" stroke="#701c1c" stroke-width="1" />
<polyline points="582.4,171.4 580.7,208.2" fill="none" stroke="#701c1c" stroke-width="1" />
<polyline points="778.3,19.0 800.1,43.7" fill="none" stroke="#701c1c" stroke-width="1" />
<polyline points="723.2,49.5 792.9,48.0 800.1,43.7" fill="none" stroke="#701c1c" stroke-width="1" />
<polyline points="739.2,80.0 752.2,98.8 781.2,106.1 782.7,123.5" fill="none" stroke="#701c1c" stroke-width="1" />
<polyline points="752.0,77.0 794.3,88.7" fill="none" stroke="#701c1c" stroke-width="1" />
<polyline points="749.3,111.9 765.3,149.6 776.9,180.1 782.7,205.0" fill="none" stroke="#701c1c" stroke-width="1" />
<polyline points="723.0,205.0 739.2,184.5 776.9,180.1 810.0,170.0" fill="none" stroke="#701c1c" stroke-width="1" />
<polyline points="1075.0,25.4 1131.2,112.2 1155.3,160.3 1145.6,166.8 1120.0,139.5 1131.2,112.2" fill="none" stroke="#701c1c" stroke-width="1" />
<polyline points="1102.3,30.2 1181.0,94.5 1197.0,105.7 1219.5,112.2 1238.8,137.9" fill="none" stroke="#701c1c" stroke-width="1" />
<polyline points="1153.7,33.5 1168.1,80.0 1181.0,94.5" fill="none" stroke="#701c1c" stroke-width="1" />
<polyline points="1319.0,38.3 1336.8,59.2" fill="none" stroke="#701c1c" stroke-width="1" />
<polyline points="1030.0,144.3 1089.4,184.4" fill="none" stroke="#701c1c" stroke-width="1" />
<polyline points="1030.0,190.0 1054.0,195.7" fill="none" stroke="#701c1c" stroke-width="1" />
<polyline points="1173.0,207.0 1197.0,225.0" fill="none" stroke="#701c1c" stroke-width="1" />
<polyline points="1173.0,207.0 1174.6,225.0" fill="none" stroke="#701c1c" stroke-width="1" />
<polyline points="263.4,258.2 306.9,195.0" fill="none" stroke="#701c1c" stroke-width="1" />
<polyline points="263.4,258.2 311.1,254.5 315.3,321.4 346.2,315.2" fill="none" stroke="#701c1c" stroke-width="1" />
<polyline points="263.4,258.2 280.2,291.9 291.5,342.4 292.9,375.0" fill="none" stroke="#701c1c" stroke-width="1" />
<polyline points="315.3,321.4 291.5,342.4" fill="none" stroke="#701c1c" stroke-width="1" />
<polyline points="410.7,228.6 395.4,252.6" fill="none" stroke="#701c1c" stroke-width="1" />
<polyline points="377.1,308.7 410.0,313.0" fill="none" stroke="#701c1c" stroke-width="1" />
<polyline points="197.4,350.3 226.9,360.7 225.5,375.0" fill="none" stroke="#701c1c" stroke-width="1" />
<polyline points="408.1,187.5 410.7,228.6 499.4,204.5 513.0,234.5 490.0,252.6 460.5,235.5 410.7,228.6" fill="none" stroke="#701c1c" stroke-width="1" />
<polyline points="494.4,170.0 496.0,178.7" fill="none" stroke="#701c1c" stroke-width="1" />
<polyline points="598.2,258.5 615.0,259.6" fill="none" stroke="#701c1c" stroke-width="1" />
<polyline points="598.2,258.5 584.0,272.7 580.7,310.0" fill="none" stroke="#701c1c" stroke-width="1" />
<polyline points="377.1,308.7 420.4,315.3 416.0,367.7" fill="none" stroke="#701c1c" stroke-width="1" />
<polyline points="460.8,338.9 472.9,360.7" fill="none" stroke="#701c1c" stroke-width="1" />
<polyline points="515.9,307.0 534.0,328.8 535.1,349.2 539.5,374.3 525.3,388.5 545.4,418.0 566.8,408.8 539.5,374.3" fill="none" stroke="#701c1c" stroke-width="1" />
<polyline points="580.7,310.0 579.3,320.8 591.9,363.4" fill="none" stroke="#701c1c" stroke-width="1" />
<polyline points="5.0,324.0 25.3,485.1" fill="none" stroke="#701c1c" stroke-width="1" />
<polyline points="83.7,414.4 84.0,400.0" fill="none" stroke="#701c1c" stroke-width="1" />
<polyline points="179.7,370.0 158.7,445.8 176.9,489.3 227.5,523.9 254.1,539.9 270.2,555.1 300.0,586.0" fill="none" stroke="#701c1c" stroke-width="1" />
<polyline points="240.1,491.3 255.5,499.2 254.1,539.9" fill="none" stroke="#701c1c" stroke-width="1" />
<polyline points="240.1,491.3 227.5,523.9" fill="none" stroke="#701c1c" stroke-width="1" />
<polyline points="197.4,350.3 202.2,400.9" fill="none" stroke="#701c1c" stroke-width="1" />
<polyline points="226.9,360.7 223.3,388.3 193.8,407.0" fill="none" stroke="#701c1c" stroke-width="1" />
<polyline points="0.0,510.0 14.3,562.8" fill="none" stroke="#701c1c" stroke-width="1" />
<polyline points="0.0,548.5 5.5,562.8" fill="none" stroke="#701c1c" stroke-width="1" />
<polyline points="183.4,578.2 238.3,627.6 246.0,641.0" fill="none" stroke="#701c1c" stroke-width="1" />
<polyline points="147.2,623.2 153.7,641.0" fill="none" stroke="#701c1c" stroke-width="1" />
<polyline points="292.9,375.0 298.1,390.9 309.3,427.4" fill="none" stroke="#701c1c" stroke-width="1" />
<polyline points="362.7,420.4 397.8,459.7 426.6,523.8 442.5,520.4 467.5,549.5" fill="none" stroke="#701c1c" stroke-width="1" />
<polyline points="426.6,523.8 426.6,546.5 408.4,555.6 362.7,420.4" fill="none" stroke="#701c1c" stroke-width="1" />
<polyline points="462.4,461.1 483.4,479.3 487.6,492.0 514.3,521.5" fill="none" stroke="#701c1c" stroke-width="1" />
<polyline points="518.5,538.6 527.6,531.8 553.7,527.2 585.0,540.7 635.8,532.0" fill="none" stroke="#701c1c" stroke-width="1" />
<polyline points="344.9,555.6 367.6,588.5 357.4,629.4" fill="none" stroke="#701c1c" stroke-width="1" />
<polyline points="300.0,586.0 323.3,613.5 332.4,641.0" fill="none" stroke="#701c1c" stroke-width="1" />
<polyline points="533.3,580.6 510.6,619.2 542.4,641.0" fill="none" stroke="#701c1c" stroke-width="1" />
<polyline points="478.8,630.5 510.6,619.2 517.4,641.0" fill="none" stroke="#701c1c" stroke-width="1" />
<polyline points="393.7,627.1 422.0,641.0" fill="none" stroke="#701c1c" stroke-width="1" />
<polyline points="393.7,627.1 392.6,641.0" fill="none" stroke="#701c1c" stroke-width="1" />
<polyline points="736.9,541.5 704.0,553.7 707.8,585.7 750.5,614.1 773.7,586.2 746.2,543.6 736.9,541.5" fill="none" stroke="#701c1c" stroke-width="1" />
<polyline points="750.5,614.1 829.2,636.9 848.0,631.0" fill="none" stroke="#701c1c" stroke-width="1" />
<polyline points="780.0,639.0 809.0,641.0" fill="none" stroke="#701c1c" stroke-width="1" />
<polyline points="995.0,641.0 1001.0,631.0" fill="none" stroke="#701c1c" stroke-width="1" />
<polyline points="1009.5,641.0 1013.6,631.0" fill="none" stroke="#701c1c" stroke-width="1" />
<polyline points="720.0,457.9 740.3,507.3" fill="none" stroke="#701c1c" stroke-width="1" />
<polyline points="609.7,602.2 664.9,641.0" fill="none" stroke="#701c1c" stroke-width="1" />
<polyline points="593.7,614.1 609.7,641.0" fill="none" stroke="#701c1c" stroke-width="1" />
<polyline points="593.7,614.1 609.7,602.2" fill="none" stroke="#701c1c" stroke-width="1" />
<polyline points="795.5,455.0 799.9,482.6 810.0,542.0" fill="none" stroke="#701c1c" stroke-width="1" />
<polyline points="598.2,258.5 615.3,262.0 706.0,286.6 642.6,221.5 637.2,209.5 655.7,202.9 642.6,221.5" fill="none" stroke="#701c1c" stroke-width="1" />
<polyline points="711.5,213.9 721.3,208.4 739.6,184.7 777.0,180.5" fill="none" stroke="#701c1c" stroke-width="1" />
<polyline points="777.0,180.5 781.4,205.8" fill="none" stroke="#701c1c" stroke-width="1" />
<polyline points="756.2,279.4 794.5,298.0 767.3,323.7 736.6,306.7 756.2,279.4" fill="none" stroke="#701c1c" stroke-width="1" />
<polyline points="784.2,405.0 799.6,393.8 810.0,383.0" fill="none" stroke="#701c1c" stroke-width="1" />
<polyline points="795.4,447.1 803.8,470.0" fill="none" stroke="#701c1c" stroke-width="1" />
<polyline points="1203.3,230.9 1173.4,206.9 1170.7,268.6 1179.3,420.0 1182.2,424.4" fill="none" stroke="#701c1c" stroke-width="1" />
<polyline points="1249.6,309.8 1244.5,354.4 1247.9,420.0 1251.7,448.9 1285.5,457.1 1249.8,510.9 1227.3,499.6 1251.7,448.9" fill="none" stroke="#701c1c" stroke-width="1" />
<polyline points="1222.7,41.5 1332.0,327.0 1326.8,359.6 1225.5,41.5" fill="none" stroke="#701c1c" stroke-width="1" />
<polyline points="1096.9,345.8 1134.7,390.5 1112.4,420.0 1097.6,433.8 1082.6,460.1 1078.9,509.0 1105.2,504.5 1129.5,420.0 1134.7,390.5" fill="none" stroke="#701c1c" stroke-width="1" />
<polyline points="1078.9,509.0 1030.0,542.8" fill="none" stroke="#701c1c" stroke-width="1" />
<polyline points="1366.0,381.9 1352.6,420.0" fill="none" stroke="#701c1c" stroke-width="1" />
<polyline points="1278.8,532.7 1242.3,572.9 1221.7,621.7 1191.6,641.0" fill="none" stroke="#701c1c" stroke-width="1" />
<polyline points="1144.6,561.6 1114.6,641.0" fill="none" stroke="#701c1c" stroke-width="1" />
<polyline points="778.9,19.0 800.2,44.2 846.8,19.0" fill="none" stroke="#701c1c" stroke-width="1" />
<polyline points="920.5,19.0 947.7,55.9" fill="none" stroke="#701c1c" stroke-width="1" />
<polyline points="972.9,19.0 1002.0,55.9" fill="none" stroke="#701c1c" stroke-width="1" />
<polyline points="976.0,19.0 1005.0,55.9" fill="none" stroke="#701c1c" stroke-width="1" />
<polyline points="1009.8,22.9 1019.5,55.9" fill="none" stroke="#701c1c" stroke-width="1" />
<polyline points="1360.7,400.0 1259.2,641.0" fill="none" stroke="#701c1c" stroke-width="2" />
<path d="M98 352h1v1h-1zM678 514h1v1h-1zM477 625h1v1h-1zM57 79h1v1h-1zM26 363h1v1h-1zM78 447h1v1h-1zM608 437h1v1h-1zM339 501h1v1h-1zM42 101h1v1h-1zM514 299h1v1h-1zM90 477h1v1h-1zM584 190h1v1h-1zM1168 623h1v1h-1zM1156 575h1v1h-1zM39 275h1v1h-1zM1345 294h1v1h-1zM1108 495h1v1h-1zM743 118h1v1h-1zM1349 183h1v1h-1zM1205 305h1v1h-1zM501 332h1v1h-1zM800 431h1v1h-1zM65 322h1v1h-1zM34 134h1v1h-1zM1263 605h1v1h-1zM644 349h1v1h-1zM106 585h1v1h-1zM766 84h1v1h-1zM145 147h1v1h-1zM535 150h1v1h-1zM801 413h1v1h-1zM784 266h1v1h-1zM1041 82h1v1h-1zM1247 51h1v1h-1zM20 423h1v1h-1zM635 147h1v1h-1zM1118 618h1v1h-1zM80 362h1v1h-1zM144 220h1v1h-1zM204 279h1v1h-1zM724 353h1v1h-1zM782 483h1v1h-1zM1189 431h1v1h-1zM48 81h1v1h-1zM403 499h1v1h-1zM706 537h1v1h-1zM55 439h1v1h-1zM755 589h1v1h-1zM86 138h1v1h-1zM74 572h1v1h-1zM600 404h1v1h-1zM217 384h1v1h-1zM829 48h1v1h-1zM777 199h1v1h-1zM717 576h1v1h-1zM504 536h1v1h-1zM769 235h1v1h-1zM723 370h1v1h-1zM153 555h1v1h-1zM627 93h1v1h-1zM29 633h1v1h-1zM37 219h1v1h-1zM25 149h1v1h-1zM495 634h1v1h-1zM1230 260h1v1h-1zM1165 623h1v1h-1zM372 129h1v1h-1zM792 58h1v1h-1zM1051 92h1v1h-1zM1172 96h1v1h-1zM790 205h1v1h-1zM154 119h1v1h-1zM490 431h1v1h-1zM84 171h1v1h-1zM35 359h1v1h-1zM372 151h1v1h-1zM80 296h1v1h-1zM1303 189h1v1h-1zM60 127h1v1h-1zM1098 302h1v1h-1zM650 530h1v1h-1zM1109 542h1v1h-1zM10 146h1v1h-1zM359 114h1v1h-1zM787 227h1v1h-1zM580 228h1v1h-1zM62 318h1v1h-1zM329 574h1v1h-1zM31 251h1v1h-1zM1072 166h1v1h-1zM654 179h1v1h-1zM360 184h1v1h-1zM453 54h1v1h-1zM239 410h1v1h-1zM722 501h1v1h-1zM761 58h1v1h-1zM469 508h1v1h-1zM492 58h1v1h-1zM52 53h1v1h-1zM45 316h1v1h-1zM1040 385h1v1h-1zM1237 158h1v1h-1zM222 113h1v1h-1zM765 275h1v1h-1zM804 286h1v1h-1zM585 122h1v1h-1zM569 544h1v1h-1zM816 46h1v1h-1zM82 438h1v1h-1zM1190 450h1v1h-1zM726 222h1v1h-1zM751 121h1v1h-1zM1237 529h1v1h-1zM316 61h1v1h-1zM372 540h1v1h-1zM775 150h1v1h-1zM312 176h1v1h-1zM123 297h1v1h-1zM276 227h1v1h-1zM682 346h1v1h-1zM71 94h1v1h-1zM1271 355h1v1h-1zM1201 119h1v1h-1zM1178 178h1v1h-1zM1337 369h1v1h-1zM495 189h1v1h-1zM751 489h1v1h-1zM641 571h1v1h-1zM4 279h1v1h-1zM22 223h1v1h-1zM1335 92h1v1h-1zM73 224h1v1h-1zM155 327h1v1h-1zM501 167h1v1h-1zM707 620h1v1h-1zM788 576h1v1h-1zM782 92h1v1h-1zM758 244h1v1h-1zM774 36h1v1h-1zM1309 156h1v1h-1zM794 588h1v1h-1zM763 546h1v1h-1zM677 597h1v1h-1zM119 450h1v1h-1zM1181 581h1v1h-1zM735 464h1v1h-1zM690 448h1v1h-1zM16 399h1v1h-1zM578 594h1v1h-1zM310 48h1v1h-1zM1182 586h1v1h-1zM1232 602h1v1h-1zM741 601h1v1h-1zM159 65h1v1h-1zM1043 392h1v1h-1zM220 486h1v1h-1zM204 525h1v1h-1zM328 314h1v1h-1zM385 189h1v1h-1zM90 174h1v1h-1zM704 497h1v1h-1zM793 390h1v1h-1zM1071 68h1v1h-1zM125 316h1v1h-1zM770 75h1v1h-1zM571 309h1v1h-1zM69 319h1v1h-1zM1291 548h1v1h-1zM407 461h1v1h-1zM722 346h1v1h-1zM714 160h1v1h-1zM423 502h1v1h-1zM46 358h1v1h-1zM143 161h1v1h-1zM76 73h1v1h-1zM123 96h1v1h-1zM45 323h1v1h-1zM574 624h1v1h-1zM161 219h1v1h-1zM130 60h1v1h-1zM750 357h1v1h-1zM1172 638h1v1h-1zM126 527h1v1h-1zM55 422h1v1h-1zM639 293h1v1h-1zM140 199h1v1h-1zM1280 340h1v1h-1zM453 571h1v1h-1zM1067 291h1v1h-1zM90 97h1v1h-1zM437 303h1v1h-1zM1138 212h1v1h-1zM374 563h1v1h-1zM779 206h1v1h-1zM491 284h1v1h-1zM45 358h1v1h-1zM1045 54h1v1h-1zM794 277h1v1h-1zM17 265h1v1h-1zM100 587h1v1h-1zM283 482h1v1h-1zM789 472h1v1h-1zM588 325h1v1h-1zM38 151h1v1h-1zM725 119h1v1h-1zM107 152h1v1h-1zM728 579h1v1h-1zM363 279h1v1h-1zM532 637h1v1h-1zM1253 114h1v1h-1zM1306 414h1v1h-1zM481 531h1v1h-1zM147 543h1v1h-1zM1077 92h1v1h-1zM561 257h1v1h-1zM769 352h1v1h-1zM228 327h1v1h-1zM362 490h1v1h-1zM728 43h1v1h-1zM29 410h1v1h-1zM945 41h1v1h-1zM21 550h1v1h-1zM741 638h1v1h-1zM20 143h1v1h-1zM168 254h1v1h-1zM101 157h1v1h-1zM147 447h1v1h-1zM731 306h1v1h-1zM640 238h1v1h-1zM792 404h1v1h-1zM299 456h1v1h-1zM1239 27h1v1h-1zM785 285h1v1h-1zM785 533h1v1h-1zM792 537h1v1h-1zM69 300h1v1h-1zM721 603h1v1h-1zM649 74h1v1h-1zM1060 370h1v1h-1zM804 499h1v1h-1zM759 161h1v1h-1zM75 171h1v1h-1zM69 454h1v1h-1zM421 380h1v1h-1zM150 268h1v1h-1zM781 234h1v1h-1zM1160 202h1v1h-1zM786 559h1v1h-1zM517 407h1v1h-1zM529 529h1v1h-1zM155 466h1v1h-1zM701 162h1v1h-1zM1138 62h1v1h-1zM103 249h1v1h-1zM10 468h1v1h-1zM656 305h1v1h-1zM505 632h1v1h-1zM602 633h1v1h-1zM1244 245h1v1h-1zM20 393h1v1h-1zM603 607h1v1h-1zM747 612h1v1h-1zM759 188h1v1h-1zM1064 437h1v1h-1zM460 585h1v1h-1zM30 462h1v1h-1zM113 259h1v1h-1zM239 614h1v1h-1zM689 360h1v1h-1zM1336 532h1v1h-1zM420 285h1v1h-1zM757 326h1v1h-1zM1053 375h1v1h-1zM1213 593h1v1h-1z" fill="rgb(110,110,110)"/>
<path d="M1242 152h1v1h-1zM726 502h1v1h-1zM474 245h1v1h-1zM328 383h1v1h-1zM752 136h1v1h-1zM145 528h1v1h-1zM19 408h1v1h-1zM1328 80h1v1h-1zM23 304h1v1h-1zM751 300h1v1h-1zM1105 144h1v1h-1zM29 328h1v1h-1zM193 51h1v1h-1zM33 164h1v1h-1zM1303 259h1v1h-1zM124 120h1v1h-1zM70 482h1v1h-1zM70 107h1v1h-1zM698 52h1v1h-1zM1069 463h1v1h-1zM1041 627h1v1h-1zM794 343h1v1h-1zM485 54h1v1h-1zM749 414h1v1h-1zM361 164h1v1h-1zM767 179h1v1h-1zM159 612h1v1h-1zM798 626h1v1h-1zM1183 571h1v1h-1zM391 242h1v1h-1zM108 73h1v1h-1zM1357 414h1v1h-1zM800 434h1v1h-1zM172 464h1v1h-1zM328 410h1v1h-1zM769 86h1v1h-1zM106 483h1v1h-1zM702 280h1v1h-1zM774 548h1v1h-1zM757 199h1v1h-1zM33 637h1v1h-1zM1233 78h1v1h-1zM62 408h1v1h-1zM681 629h1v1h-1zM432 565h1v1h-1zM683 88h1v1h-1zM1221 558h1v1h-1zM109 296h1v1h-1zM34 387h1v1h-1zM1124 40h1v1h-1zM607 565h1v1h-1zM1338 262h1v1h-1zM678 597h1v1h-1zM209 183h1v1h-1zM1142 512h1v1h-1zM199 358h1v1h-1zM166 612h1v1h-1zM60 364h1v1h-1zM476 220h1v1h-1zM1324 446h1v1h-1zM242 81h1v1h-1zM1191 584h1v1h-1zM1268 253h1v1h-1zM290 70h1v1h-1zM21 304h1v1h-1zM356 368h1v1h-1zM1321 461h1v1h-1zM70 114h1v1h-1zM1052 291h1v1h-1zM462 173h1v1h-1zM1362 576h1v1h-1zM736 190h1v1h-1zM447 450h1v1h-1zM766 107h1v1h-1zM5 385h1v1h-1zM1274 369h1v1h-1zM427 372h1v1h-1zM107 488h1v1h-1zM363 436h1v1h-1zM1112 313h1v1h-1zM555 533h1v1h-1zM697 252h1v1h-1zM163 580h1v1h-1zM158 632h1v1h-1zM601 636h1v1h-1zM774 487h1v1h-1zM1301 136h1v1h-1zM725 490h1v1h-1zM613 562h1v1h-1zM26 252h1v1h-1zM417 55h1v1h-1zM131 429h1v1h-1zM316 105h1v1h-1zM134 254h1v1h-1zM648 577h1v1h-1zM773 636h1v1h-1zM738 294h1v1h-1zM1161 564h1v1h-1zM122 92h1v1h-1zM698 137h1v1h-1zM115 263h1v1h-1zM692 635h1v1h-1zM318 134h1v1h-1zM795 226h1v1h-1zM1192 271h1v1h-1zM64 131h1v1h-1zM447 395h1v1h-1zM124 86h1v1h-1zM319 503h1v1h-1zM756 471h1v1h-1zM741 202h1v1h-1zM224 269h1v1h-1zM25 79h1v1h-1zM507 232h1v1h-1zM548 197h1v1h-1zM633 196h1v1h-1zM692 36h1v1h-1zM475 108h1v1h-1zM741 552h1v1h-1zM1125 357h1v1h-1zM114 439h1v1h-1zM716 551h1v1h-1zM234 234h1v1h-1zM158 278h1v1h-1zM641 476h1v1h-1zM1221 157h1v1h-1zM1073 134h1v1h-1zM1314 624h1v1h-1zM284 382h1v1h-1zM776 336h1v1h-1zM695 63h1v1h-1zM1034 541h1v1h-1zM103 577h1v1h-1zM116 271h1v1h-1zM797 239h1v1h-1zM673 144h1v1h-1zM533 318h1v1h-1zM1193 38h1v1h-1zM604 409h1v1h-1zM1132 328h1v1h-1zM442 432h1v1h-1zM205 348h1v1h-1zM28 347h1v1h-1zM783 476h1v1h-1zM782 433h1v1h-1zM1326 118h1v1h-1zM256 327h1v1h-1zM719 519h1v1h-1zM778 505h1v1h-1zM803 432h1v1h-1zM744 516h1v1h-1zM237 190h1v1h-1zM1198 467h1v1h-1zM792 445h1v1h-1zM730 200h1v1h-1zM798 336h1v1h-1zM160 80h1v1h-1zM499 530h1v1h-1zM756 91h1v1h-1zM182 52h1v1h-1zM124 578h1v1h-1zM1325 117h1v1h-1zM64 373h1v1h-1zM147 111h1v1h-1zM476 373h1v1h-1zM57 233h1v1h-1zM728 237h1v1h-1zM638 37h1v1h-1zM557 460h1v1h-1zM505 355h1v1h-1zM1096 449h1v1h-1zM502 184h1v1h-1zM703 471h1v1h-1zM353 412h1v1h-1zM1290 250h1v1h-1zM791 384h1v1h-1zM1054 589h1v1h-1zM20 312h1v1h-1zM799 433h1v1h-1zM531 349h1v1h-1zM1273 503h1v1h-1zM1171 88h1v1h-1zM411 340h1v1h-1zM121 474h1v1h-1zM584 264h1v1h-1zM293 311h1v1h-1zM618 633h1v1h-1zM716 455h1v1h-1zM119 558h1v1h-1zM1134 418h1v1h-1zM737 621h1v1h-1zM690 414h1v1h-1zM192 318h1v1h-1zM1128 136h1v1h-1zM723 354h1v1h-1zM32 464h1v1h-1zM191 565h1v1h-1zM604 546h1v1h-1zM797 552h1v1h-1zM140 616h1v1h-1zM195 148h1v1h-1zM48 293h1v1h-1zM779 512h1v1h-1zM403 633h1v1h-1zM1327 598h1v1h-1zM19 328h1v1h-1zM387 305h1v1h-1zM611 253h1v1h-1zM74 599h1v1h-1zM177 50h1v1h-1zM564 230h1v1h-1zM753 631h1v1h-1zM681 329h1v1h-1zM576 307h1v1h-1zM1281 113h1v1h-1zM71 439h1v1h-1zM749 500h1v1h-1zM59 431h1v1h-1zM46 552h1v1h-1zM371 421h1v1h-1zM777 48h1v1h-1zM1137 374h1v1h-1zM784 210h1v1h-1zM602 447h1v1h-1zM108 552h1v1h-1zM1176 576h1v1h-1zM245 438h1v1h-1zM487 444h1v1h-1zM504 60h1v1h-1zM1258 628h1v1h-1zM457 475h1v1h-1zM165 90h1v1h-1zM519 508h1v1h-1zM797 573h1v1h-1zM1105 446h1v1h-1zM259 305h1v1h-1zM403 384h1v1h-1zM193 189h1v1h-1zM346 85h1v1h-1zM138 512h1v1h-1zM56 169h1v1h-1zM886 639h1v1h-1zM1158 250h1v1h-1zM701 229h1v1h-1zM906 22h1v1h-1zM49 405h1v1h-1zM1071 145h1v1h-1zM29 276h1v1h-1zM46 189h1v1h-1zM763 146h1v1h-1zM1037 125h1v1h-1zM746 106h1v1h-1zM1331 132h1v1h-1zM442 457h1v1h-1zM916 45h1v1h-1zM720 401h1v1h-1zM1329 235h1v1h-1zM355 598h1v1h-1zM518 596h1v1h-1zM659 363h1v1h-1zM332 460h1v1h-1zM468 164h1v1h-1zM1246 521h1v1h-1zM426 274h1v1h-1zM794 543h1v1h-1zM363 303h1v1h-1zM1235 569h1v1h-1zM36 131h1v1h-1zM1170 384h1v1h-1zM110 55h1v1h-1z" fill="rgb(200,200,200)"/>
<path d="M95 75h1v1h-1zM765 443h1v1h-1zM750 568h1v1h-1zM206 428h1v1h-1zM249 194h1v1h-1zM309 141h1v1h-1zM1060 112h1v1h-1zM1197 605h1v1h-1zM1358 41h1v1h-1zM409 410h1v1h-1zM99 597h1v1h-1zM153 62h1v1h-1zM119 457h1v1h-1zM193 145h1v1h-1zM1087 432h1v1h-1zM121 406h1v1h-1zM646 370h1v1h-1zM792 567h1v1h-1zM241 481h1v1h-1zM145 241h1v1h-1zM1268 575h1v1h-1zM89 386h1v1h-1zM134 310h1v1h-1zM709 81h1v1h-1zM789 587h1v1h-1zM53 92h1v1h-1zM748 502h1v1h-1zM125 520h1v1h-1zM709 31h1v1h-1zM214 537h1v1h-1zM400 627h1v1h-1zM465 106h1v1h-1zM712 162h1v1h-1zM507 389h1v1h-1zM61 95h1v1h-1zM1113 546h1v1h-1zM725 62h1v1h-1zM474 122h1v1h-1zM800 328h1v1h-1zM204 547h1v1h-1zM735 639h1v1h-1zM82 370h1v1h-1zM561 94h1v1h-1zM145 81h1v1h-1zM231 184h1v1h-1zM254 623h1v1h-1zM330 99h1v1h-1zM771 160h1v1h-1zM1060 197h1v1h-1zM408 569h1v1h-1zM43 398h1v1h-1zM741 340h1v1h-1zM15 177h1v1h-1zM59 394h1v1h-1zM196 466h1v1h-1zM796 68h1v1h-1zM1315 392h1v1h-1zM466 104h1v1h-1zM1340 376h1v1h-1zM1335 300h1v1h-1zM723 189h1v1h-1zM1279 407h1v1h-1zM685 364h1v1h-1zM1320 141h1v1h-1zM328 142h1v1h-1zM996 24h1v1h-1zM94 366h1v1h-1zM160 309h1v1h-1zM3 566h1v1h-1zM802 368h1v1h-1zM258 535h1v1h-1zM1341 409h1v1h-1zM1083 312h1v1h-1zM1063 214h1v1h-1zM1210 563h1v1h-1zM90 276h1v1h-1zM734 365h1v1h-1zM117 504h1v1h-1zM729 63h1v1h-1zM759 529h1v1h-1zM413 493h1v1h-1zM102 89h1v1h-1zM17 353h1v1h-1zM644 289h1v1h-1zM43 584h1v1h-1zM145 62h1v1h-1zM264 615h1v1h-1zM1309 451h1v1h-1zM449 474h1v1h-1zM72 53h1v1h-1zM604 72h1v1h-1zM31 412h1v1h-1zM358 398h1v1h-1zM1162 552h1v1h-1zM677 522h1v1h-1zM57 238h1v1h-1zM803 157h1v1h-1zM1054 567h1v1h-1zM18 431h1v1h-1zM503 462h1v1h-1zM438 268h1v1h-1zM536 213h1v1h-1zM397 210h1v1h-1zM1352 605h1v1h-1zM1179 128h1v1h-1zM1093 391h1v1h-1zM722 395h1v1h-1zM236 474h1v1h-1zM201 78h1v1h-1zM1155 46h1v1h-1zM1112 190h1v1h-1zM160 484h1v1h-1zM804 326h1v1h-1zM203 628h1v1h-1zM400 455h1v1h-1zM1307 176h1v1h-1zM22 49h1v1h-1zM647 504h1v1h-1zM313 162h1v1h-1zM516 61h1v1h-1zM1325 491h1v1h-1zM307 224h1v1h-1zM513 332h1v1h-1zM68 121h1v1h-1zM161 153h1v1h-1zM1308 67h1v1h-1zM8 396h1v1h-1zM1316 380h1v1h-1zM795 26h1v1h-1zM1311 72h1v1h-1zM48 299h1v1h-1zM962 23h1v1h-1zM295 107h1v1h-1zM1139 473h1v1h-1zM780 184h1v1h-1zM142 242h1v1h-1zM498 358h1v1h-1zM653 106h1v1h-1zM114 64h1v1h-1zM596 283h1v1h-1zM785 563h1v1h-1zM737 102h1v1h-1zM304 620h1v1h-1zM482 79h1v1h-1zM16 617h1v1h-1zM123 108h1v1h-1zM710 421h1v1h-1zM177 294h1v1h-1zM96 539h1v1h-1zM245 169h1v1h-1zM784 220h1v1h-1zM1301 622h1v1h-1zM572 347h1v1h-1zM98 452h1v1h-1zM776 465h1v1h-1zM648 62h1v1h-1zM726 260h1v1h-1zM463 517h1v1h-1zM82 634h1v1h-1zM1076 494h1v1h-1zM149 389h1v1h-1zM138 398h1v1h-1zM732 632h1v1h-1zM715 544h1v1h-1zM435 56h1v1h-1zM669 580h1v1h-1zM501 441h1v1h-1zM669 456h1v1h-1zM23 456h1v1h-1zM58 199h1v1h-1zM796 69h1v1h-1zM1282 595h1v1h-1zM701 480h1v1h-1zM1033 32h1v1h-1zM287 555h1v1h-1zM232 428h1v1h-1zM210 161h1v1h-1zM1191 280h1v1h-1zM27 380h1v1h-1zM249 182h1v1h-1zM30 609h1v1h-1zM296 402h1v1h-1zM826 46h1v1h-1zM54 604h1v1h-1zM687 180h1v1h-1zM755 263h1v1h-1zM189 94h1v1h-1zM117 68h1v1h-1zM1184 258h1v1h-1zM76 483h1v1h-1zM373 627h1v1h-1zM684 86h1v1h-1zM387 618h1v1h-1zM741 511h1v1h-1zM600 206h1v1h-1zM762 368h1v1h-1zM1237 42h1v1h-1zM372 221h1v1h-1zM117 106h1v1h-1zM724 639h1v1h-1zM726 488h1v1h-1zM1279 364h1v1h-1zM79 432h1v1h-1zM788 219h1v1h-1zM1301 54h1v1h-1zM570 390h1v1h-1zM1069 138h1v1h-1zM452 490h1v1h-1zM231 493h1v1h-1zM735 500h1v1h-1zM1280 39h1v1h-1zM71 429h1v1h-1zM1060 397h1v1h-1zM1259 404h1v1h-1zM24 88h1v1h-1zM1191 477h1v1h-1zM758 373h1v1h-1zM335 554h1v1h-1zM34 455h1v1h-1zM1226 602h1v1h-1zM1069 34h1v1h-1zM1310 488h1v1h-1zM18 54h1v1h-1zM756 595h1v1h-1zM864 39h1v1h-1zM1345 217h1v1h-1zM24 135h1v1h-1zM116 552h1v1h-1zM739 112h1v1h-1zM442 352h1v1h-1zM1182 54h1v1h-1zM322 223h1v1h-1zM558 244h1v1h-1zM793 137h1v1h-1zM23 306h1v1h-1zM12 338h1v1h-1zM122 267h1v1h-1zM1204 223h1v1h-1zM766 433h1v1h-1zM720 164h1v1h-1zM156 296h1v1h-1zM48 501h1v1h-1zM54 289h1v1h-1zM1083 468h1v1h-1zM1155 593h1v1h-1zM687 518h1v1h-1zM22 497h1v1h-1zM743 334h1v1h-1zM50 192h1v1h-1zM643 535h1v1h-1zM506 571h1v1h-1zM1328 177h1v1h-1zM336 242h1v1h-1zM89 209h1v1h-1zM32 356h1v1h-1zM743 448h1v1h-1zM741 491h1v1h-1zM768 522h1v1h-1zM94 548h1v1h-1zM451 263h1v1h-1zM174 592h1v1h-1zM144 589h1v1h-1zM213 189h1v1h-1zM169 229h1v1h-1zM792 141h1v1h-1zM729 405h1v1h-1zM334 210h1v1h-1zM142 578h1v1h-1zM1267 265h1v1h-1z" fill="rgb(220,220,220)"/>
<path d="M395 108h1v1h-1zM111 205h1v1h-1zM229 91h1v1h-1zM117 82h1v1h-1zM407 418h1v1h-1zM144 367h1v1h-1zM312 564h1v1h-1zM703 326h1v1h-1zM355 397h1v1h-1zM745 571h1v1h-1zM215 296h1v1h-1zM1328 359h1v1h-1zM615 206h1v1h-1zM467 75h1v1h-1zM522 482h1v1h-1zM461 57h1v1h-1zM110 160h1v1h-1zM574 443h1v1h-1zM43 432h1v1h-1zM168 618h1v1h-1zM401 192h1v1h-1zM1137 398h1v1h-1zM197 432h1v1h-1zM295 555h1v1h-1zM280 314h1v1h-1zM767 159h1v1h-1zM662 406h1v1h-1zM1365 439h1v1h-1zM18 561h1v1h-1zM991 28h1v1h-1zM1103 195h1v1h-1zM1081 304h1v1h-1zM111 215h1v1h-1zM664 371h1v1h-1zM1259 458h1v1h-1zM1040 319h1v1h-1zM440 164h1v1h-1zM557 467h1v1h-1zM1273 621h1v1h-1zM305 132h1v1h-1zM592 610h1v1h-1zM652 528h1v1h-1zM682 295h1v1h-1zM1323 397h1v1h-1zM790 108h1v1h-1zM1142 519h1v1h-1zM92 587h1v1h-1zM263 466h1v1h-1zM547 582h1v1h-1zM50 217h1v1h-1zM492 147h1v1h-1zM667 506h1v1h-1zM675 329h1v1h-1zM81 439h1v1h-1zM791 364h1v1h-1zM261 314h1v1h-1zM1060 54h1v1h-1zM196 258h1v1h-1zM501 170h1v1h-1zM1145 217h1v1h-1zM56 301h1v1h-1zM741 157h1v1h-1zM497 146h1v1h-1zM413 430h1v1h-1zM711 166h1v1h-1zM1 180h1v1h-1zM673 74h1v1h-1zM435 367h1v1h-1zM57 178h1v1h-1zM56 403h1v1h-1zM202 337h1v1h-1zM620 522h1v1h-1zM702 224h1v1h-1zM221 478h1v1h-1zM56 533h1v1h-1zM663 70h1v1h-1zM721 175h1v1h-1zM1203 630h1v1h-1zM1085 349h1v1h-1zM1321 74h1v1h-1zM1071 85h1v1h-1zM92 243h1v1h-1zM716 168h1v1h-1zM1211 219h1v1h-1zM423 506h1v1h-1zM1249 83h1v1h-1zM1314 138h1v1h-1zM779 131h1v1h-1zM77 443h1v1h-1zM174 157h1v1h-1zM1276 622h1v1h-1zM356 116h1v1h-1zM1159 528h1v1h-1zM178 640h1v1h-1zM753 491h1v1h-1zM578 393h1v1h-1zM194 385h1v1h-1zM286 477h1v1h-1zM408 59h1v1h-1zM304 552h1v1h-1zM39 146h1v1h-1zM1133 38h1v1h-1zM1330 133h1v1h-1zM696 95h1v1h-1zM51 514h1v1h-1zM780 157h1v1h-1zM620 167h1v1h-1zM1227 229h1v1h-1zM165 118h1v1h-1zM1302 336h1v1h-1zM541 158h1v1h-1zM1226 141h1v1h-1zM155 157h1v1h-1zM31 159h1v1h-1zM784 32h1v1h-1zM174 522h1v1h-1zM103 366h1v1h-1zM716 108h1v1h-1zM458 288h1v1h-1zM774 221h1v1h-1zM174 103h1v1h-1zM1106 161h1v1h-1zM1159 371h1v1h-1zM27 562h1v1h-1zM1046 209h1v1h-1zM385 478h1v1h-1zM34 546h1v1h-1zM107 153h1v1h-1zM758 257h1v1h-1zM1349 266h1v1h-1zM371 150h1v1h-1zM118 594h1v1h-1zM34 323h1v1h-1zM185 220h1v1h-1zM668 547h1v1h-1zM2 153h1v1h-1zM25 277h1v1h-1zM1065 21h1v1h-1zM320 552h1v1h-1zM1278 163h1v1h-1zM774 66h1v1h-1zM360 335h1v1h-1zM1169 102h1v1h-1zM626 408h1v1h-1zM7 101h1v1h-1zM679 393h1v1h-1zM759 48h1v1h-1zM360 558h1v1h-1zM409 402h1v1h-1zM661 428h1v1h-1zM166 307h1v1h-1zM505 595h1v1h-1zM1357 55h1v1h-1zM61 423h1v1h-1zM1066 593h1v1h-1zM53 439h1v1h-1zM88 568h1v1h-1zM1144 34h1v1h-1zM50 385h1v1h-1zM702 471h1v1h-1zM232 328h1v1h-1zM1300 327h1v1h-1zM486 497h1v1h-1zM1228 106h1v1h-1zM32 540h1v1h-1zM32 176h1v1h-1zM180 522h1v1h-1zM21 138h1v1h-1zM373 247h1v1h-1zM1313 627h1v1h-1zM763 183h1v1h-1zM591 114h1v1h-1zM661 540h1v1h-1zM440 217h1v1h-1zM151 306h1v1h-1zM74 187h1v1h-1zM56 555h1v1h-1zM31 477h1v1h-1zM419 598h1v1h-1zM1264 513h1v1h-1zM785 133h1v1h-1zM180 544h1v1h-1zM145 513h1v1h-1zM722 603h1v1h-1zM192 597h1v1h-1zM1078 107h1v1h-1zM711 487h1v1h-1zM69 475h1v1h-1zM771 471h1v1h-1zM54 114h1v1h-1zM655 61h1v1h-1zM341 622h1v1h-1zM1105 347h1v1h-1zM659 107h1v1h-1zM677 584h1v1h-1zM73 479h1v1h-1zM1356 230h1v1h-1zM434 593h1v1h-1zM136 363h1v1h-1zM663 154h1v1h-1zM1164 513h1v1h-1zM1044 263h1v1h-1zM34 592h1v1h-1zM684 510h1v1h-1zM710 98h1v1h-1zM1087 350h1v1h-1zM524 192h1v1h-1zM1277 30h1v1h-1zM635 171h1v1h-1zM726 635h1v1h-1zM1109 56h1v1h-1zM721 30h1v1h-1zM610 462h1v1h-1zM203 467h1v1h-1zM632 524h1v1h-1zM335 59h1v1h-1zM124 55h1v1h-1zM82 575h1v1h-1zM56 617h1v1h-1zM725 135h1v1h-1zM68 608h1v1h-1zM82 42h1v1h-1zM75 545h1v1h-1zM344 173h1v1h-1zM753 524h1v1h-1zM76 338h1v1h-1zM439 314h1v1h-1zM529 253h1v1h-1zM796 388h1v1h-1zM265 520h1v1h-1zM6 605h1v1h-1zM719 603h1v1h-1zM520 550h1v1h-1zM15 292h1v1h-1zM799 394h1v1h-1zM272 628h1v1h-1zM48 340h1v1h-1zM741 554h1v1h-1zM318 590h1v1h-1zM435 42h1v1h-1zM79 596h1v1h-1zM758 358h1v1h-1zM238 396h1v1h-1zM80 126h1v1h-1zM70 320h1v1h-1zM1174 102h1v1h-1zM156 448h1v1h-1zM17 513h1v1h-1zM437 57h1v1h-1zM7 284h1v1h-1zM87 132h1v1h-1zM1297 277h1v1h-1zM102 439h1v1h-1zM677 364h1v1h-1zM39 263h1v1h-1zM58 51h1v1h-1zM1362 230h1v1h-1zM826 31h1v1h-1zM768 627h1v1h-1zM253 234h1v1h-1zM44 245h1v1h-1zM1164 616h1v1h-1zM769 551h1v1h-1zM1358 327h1v1h-1zM767 352h1v1h-1zM636 501h1v1h-1zM1046 329h1v1h-1zM499 590h1v1h-1zM629 350h1v1h-1zM815 637h1v1h-1zM61 75h1v1h-1zM767 598h1v1h-1zM1086 589h1v1h-1zM208 452h1v1h-1zM753 617h1v1h-1zM744 311h1v1h-1zM1220 141h1v1h-1zM120 140h1v1h-1zM142 554h1v1h-1zM681 20h1v1h-1zM592 109h1v1h-1zM53 164h1v1h-1zM1065 403h1v1h-1zM103 187h1v1h-1zM144 607h1v1h-1zM1285 183h1v1h-1zM573 294h1v1h-1zM1328 256h1v1h-1zM689 610h1v1h-1zM1274 337h1v1h-1zM44 212h1v1h-1zM773 367h1v1h-1zM74 270h1v1h-1zM500 54h1v1h-1zM14 131h1v1h-1z" fill="rgb(170,170,170)"/>
<path d="M85 56h1v1h-1zM207 323h1v1h-1zM82 455h1v1h-1zM535 267h1v1h-1zM1345 398h1v1h-1zM37 386h1v1h-1zM222 434h1v1h-1zM21 445h1v1h-1zM1271 65h1v1h-1zM715 611h1v1h-1zM1283 140h1v1h-1zM51 463h1v1h-1zM11 598h1v1h-1zM213 242h1v1h-1zM694 58h1v1h-1zM1077 344h1v1h-1zM20 180h1v1h-1zM957 38h1v1h-1zM1244 487h1v1h-1zM1281 163h1v1h-1zM26 553h1v1h-1zM84 65h1v1h-1zM771 417h1v1h-1zM195 156h1v1h-1zM1039 128h1v1h-1zM769 632h1v1h-1zM758 613h1v1h-1zM739 160h1v1h-1zM55 557h1v1h-1zM310 300h1v1h-1zM588 489h1v1h-1zM174 492h1v1h-1zM1146 203h1v1h-1zM12 613h1v1h-1zM771 280h1v1h-1zM1209 36h1v1h-1zM310 621h1v1h-1zM1253 560h1v1h-1zM447 394h1v1h-1zM1142 384h1v1h-1zM499 111h1v1h-1zM147 475h1v1h-1zM663 573h1v1h-1zM71 505h1v1h-1zM526 274h1v1h-1zM1070 584h1v1h-1zM762 444h1v1h-1zM431 623h1v1h-1zM87 626h1v1h-1zM330 537h1v1h-1zM790 594h1v1h-1zM770 53h1v1h-1zM416 100h1v1h-1zM1112 328h1v1h-1zM766 517h1v1h-1zM443 542h1v1h-1zM46 338h1v1h-1zM129 84h1v1h-1zM1155 508h1v1h-1zM72 308h1v1h-1zM63 262h1v1h-1zM17 556h1v1h-1zM1261 376h1v1h-1zM92 262h1v1h-1zM259 581h1v1h-1zM757 63h1v1h-1zM796 603h1v1h-1zM43 129h1v1h-1zM1066 264h1v1h-1zM5 162h1v1h-1zM100 236h1v1h-1zM1080 162h1v1h-1zM753 76h1v1h-1zM387 605h1v1h-1zM1158 565h1v1h-1zM47 386h1v1h-1zM1229 121h1v1h-1zM73 500h1v1h-1zM197 124h1v1h-1zM523 62h1v1h-1zM311 54h1v1h-1zM1172 258h1v1h-1zM260 636h1v1h-1zM603 470h1v1h-1zM613 248h1v1h-1zM719 497h1v1h-1zM162 484h1v1h-1zM1314 593h1v1h-1zM112 225h1v1h-1zM54 48h1v1h-1zM789 626h1v1h-1zM598 21h1v1h-1zM44 617h1v1h-1zM492 269h1v1h-1zM645 141h1v1h-1zM509 584h1v1h-1zM268 613h1v1h-1zM1225 454h1v1h-1zM220 383h1v1h-1zM215 209h1v1h-1zM1359 335h1v1h-1zM642 100h1v1h-1zM745 521h1v1h-1zM759 537h1v1h-1zM87 450h1v1h-1zM1269 267h1v1h-1zM767 626h1v1h-1zM635 540h1v1h-1zM170 546h1v1h-1zM363 267h1v1h-1zM692 42h1v1h-1zM1243 121h1v1h-1zM58 60h1v1h-1zM126 114h1v1h-1zM17 295h1v1h-1zM40 358h1v1h-1zM580 630h1v1h-1zM560 485h1v1h-1zM1293 614h1v1h-1zM379 71h1v1h-1zM1327 75h1v1h-1zM1142 168h1v1h-1zM10 273h1v1h-1zM600 524h1v1h-1zM211 246h1v1h-1zM184 569h1v1h-1zM349 546h1v1h-1zM1271 173h1v1h-1zM225 250h1v1h-1zM1162 447h1v1h-1zM613 165h1v1h-1zM727 189h1v1h-1zM1339 149h1v1h-1zM618 590h1v1h-1zM89 209h1v1h-1zM470 221h1v1h-1zM486 540h1v1h-1zM48 535h1v1h-1zM174 639h1v1h-1zM100 636h1v1h-1zM1362 450h1v1h-1zM58 328h1v1h-1zM729 381h1v1h-1zM640 86h1v1h-1zM706 89h1v1h-1zM67 479h1v1h-1zM801 406h1v1h-1zM296 178h1v1h-1zM121 501h1v1h-1zM203 639h1v1h-1zM686 86h1v1h-1zM890 44h1v1h-1zM574 333h1v1h-1zM562 448h1v1h-1zM763 538h1v1h-1zM15 472h1v1h-1zM159 433h1v1h-1zM1205 447h1v1h-1zM736 36h1v1h-1zM799 282h1v1h-1zM731 330h1v1h-1zM70 195h1v1h-1zM1066 259h1v1h-1zM611 551h1v1h-1zM425 534h1v1h-1zM449 631h1v1h-1zM796 77h1v1h-1zM68 321h1v1h-1zM734 459h1v1h-1zM940 28h1v1h-1zM480 547h1v1h-1zM798 347h1v1h-1zM432 200h1v1h-1zM268 383h1v1h-1zM86 65h1v1h-1zM76 226h1v1h-1zM429 256h1v1h-1zM301 423h1v1h-1zM291 601h1v1h-1zM640 41h1v1h-1zM606 38h1v1h-1zM1284 25h1v1h-1zM773 403h1v1h-1zM83 456h1v1h-1zM723 245h1v1h-1zM1259 434h1v1h-1zM638 97h1v1h-1zM349 205h1v1h-1zM769 26h1v1h-1zM165 360h1v1h-1zM564 365h1v1h-1zM33 384h1v1h-1zM771 238h1v1h-1zM469 221h1v1h-1zM758 441h1v1h-1zM730 581h1v1h-1zM635 545h1v1h-1zM738 517h1v1h-1zM754 404h1v1h-1zM1102 107h1v1h-1zM446 84h1v1h-1zM365 632h1v1h-1zM459 408h1v1h-1zM521 611h1v1h-1zM762 294h1v1h-1zM556 554h1v1h-1zM374 130h1v1h-1zM49 508h1v1h-1zM1079 61h1v1h-1zM1195 304h1v1h-1zM1146 232h1v1h-1zM1147 601h1v1h-1zM156 557h1v1h-1zM1050 113h1v1h-1zM598 613h1v1h-1zM674 347h1v1h-1zM124 578h1v1h-1zM613 24h1v1h-1zM744 261h1v1h-1zM572 505h1v1h-1zM1332 572h1v1h-1zM685 334h1v1h-1zM45 618h1v1h-1zM71 634h1v1h-1zM748 280h1v1h-1zM244 265h1v1h-1zM74 269h1v1h-1zM1062 75h1v1h-1zM29 336h1v1h-1zM398 639h1v1h-1zM745 149h1v1h-1zM1072 73h1v1h-1zM1215 386h1v1h-1zM1089 54h1v1h-1zM1237 57h1v1h-1zM1141 435h1v1h-1zM772 92h1v1h-1zM728 59h1v1h-1zM705 627h1v1h-1zM211 636h1v1h-1zM199 115h1v1h-1zM61 109h1v1h-1zM735 70h1v1h-1zM1295 271h1v1h-1zM746 455h1v1h-1zM438 612h1v1h-1zM994 24h1v1h-1zM1082 19h1v1h-1zM1278 621h1v1h-1zM230 175h1v1h-1zM784 48h1v1h-1zM781 269h1v1h-1zM52 384h1v1h-1zM739 298h1v1h-1zM1 600h1v1h-1zM1293 483h1v1h-1zM762 555h1v1h-1zM1089 286h1v1h-1zM660 453h1v1h-1zM756 581h1v1h-1zM1209 507h1v1h-1zM406 293h1v1h-1zM684 614h1v1h-1zM745 517h1v1h-1zM749 420h1v1h-1zM726 84h1v1h-1zM739 486h1v1h-1zM64 538h1v1h-1zM130 346h1v1h-1zM75 440h1v1h-1zM247 57h1v1h-1zM61 90h1v1h-1zM771 508h1v1h-1zM1109 536h1v1h-1zM754 257h1v1h-1zM598 74h1v1h-1z" fill="rgb(240,240,240)"/>
<path d="M493 173h1v1h-1zM1207 614h1v1h-1zM1296 400h1v1h-1zM708 583h1v1h-1zM727 503h1v1h-1zM54 503h1v1h-1zM755 595h1v1h-1zM59 460h1v1h-1zM552 235h1v1h-1zM70 430h1v1h-1zM761 264h1v1h-1zM583 359h1v1h-1zM1178 153h1v1h-1zM154 68h1v1h-1zM633 518h1v1h-1zM107 141h1v1h-1zM789 221h1v1h-1zM796 597h1v1h-1zM234 235h1v1h-1zM1099 620h1v1h-1zM245 313h1v1h-1zM688 427h1v1h-1zM1131 117h1v1h-1zM16 361h1v1h-1zM618 159h1v1h-1zM152 405h1v1h-1zM1249 606h1v1h-1zM703 378h1v1h-1zM117 571h1v1h-1zM713 119h1v1h-1zM224 428h1v1h-1zM17 550h1v1h-1zM784 484h1v1h-1zM116 370h1v1h-1zM749 70h1v1h-1zM651 385h1v1h-1zM771 269h1v1h-1zM77 575h1v1h-1zM764 538h1v1h-1zM1325 287h1v1h-1zM298 374h1v1h-1zM651 561h1v1h-1zM606 237h1v1h-1zM1040 87h1v1h-1zM800 26h1v1h-1zM442 221h1v1h-1zM711 634h1v1h-1zM569 434h1v1h-1zM698 333h1v1h-1zM1223 338h1v1h-1zM594 192h1v1h-1zM793 203h1v1h-1zM973 44h1v1h-1zM53 212h1v1h-1zM1127 366h1v1h-1zM1277 424h1v1h-1zM1365 269h1v1h-1zM666 64h1v1h-1zM1192 516h1v1h-1zM753 602h1v1h-1zM746 490h1v1h-1zM1178 559h1v1h-1zM205 476h1v1h-1zM275 409h1v1h-1zM1325 345h1v1h-1zM184 487h1v1h-1zM780 28h1v1h-1zM797 246h1v1h-1zM275 75h1v1h-1zM53 237h1v1h-1zM551 145h1v1h-1zM779 447h1v1h-1zM164 431h1v1h-1zM562 272h1v1h-1zM344 540h1v1h-1zM164 443h1v1h-1zM532 225h1v1h-1zM12 549h1v1h-1zM1100 236h1v1h-1zM783 189h1v1h-1zM54 533h1v1h-1zM724 162h1v1h-1zM764 306h1v1h-1zM778 466h1v1h-1zM1013 42h1v1h-1zM1096 42h1v1h-1zM1037 567h1v1h-1zM80 472h1v1h-1zM466 616h1v1h-1zM304 59h1v1h-1zM69 431h1v1h-1zM1242 283h1v1h-1zM794 570h1v1h-1zM96 487h1v1h-1zM98 312h1v1h-1zM121 49h1v1h-1zM293 306h1v1h-1zM317 530h1v1h-1zM1047 171h1v1h-1zM218 448h1v1h-1zM1326 583h1v1h-1zM752 592h1v1h-1zM1359 458h1v1h-1zM113 597h1v1h-1zM150 197h1v1h-1zM490 578h1v1h-1zM124 580h1v1h-1zM732 197h1v1h-1zM597 429h1v1h-1zM1103 76h1v1h-1zM269 576h1v1h-1zM1356 588h1v1h-1zM151 189h1v1h-1zM410 475h1v1h-1zM252 622h1v1h-1zM688 539h1v1h-1zM764 305h1v1h-1zM18 409h1v1h-1zM665 295h1v1h-1zM116 517h1v1h-1zM777 339h1v1h-1zM1325 198h1v1h-1zM801 569h1v1h-1zM87 223h1v1h-1zM665 539h1v1h-1zM124 434h1v1h-1zM1326 472h1v1h-1zM767 314h1v1h-1zM321 173h1v1h-1zM369 44h1v1h-1zM730 132h1v1h-1zM225 138h1v1h-1zM1094 208h1v1h-1zM1133 19h1v1h-1zM664 515h1v1h-1zM740 590h1v1h-1zM866 23h1v1h-1zM8 180h1v1h-1zM136 514h1v1h-1zM143 320h1v1h-1zM160 572h1v1h-1zM68 561h1v1h-1zM1302 102h1v1h-1zM1355 246h1v1h-1zM383 611h1v1h-1zM700 175h1v1h-1zM212 497h1v1h-1zM791 234h1v1h-1zM57 538h1v1h-1zM495 309h1v1h-1zM500 611h1v1h-1zM232 218h1v1h-1zM354 385h1v1h-1zM83 196h1v1h-1zM44 515h1v1h-1zM782 614h1v1h-1zM753 183h1v1h-1zM2 570h1v1h-1zM197 387h1v1h-1zM52 635h1v1h-1zM40 552h1v1h-1zM778 487h1v1h-1zM753 35h1v1h-1zM229 564h1v1h-1zM1038 543h1v1h-1zM127 570h1v1h-1zM468 162h1v1h-1zM801 304h1v1h-1zM1294 630h1v1h-1zM35 88h1v1h-1zM522 489h1v1h-1zM707 481h1v1h-1zM176 66h1v1h-1zM1363 371h1v1h-1zM1246 276h1v1h-1zM695 121h1v1h-1zM752 598h1v1h-1zM593 330h1v1h-1zM745 339h1v1h-1zM1347 395h1v1h-1zM1357 233h1v1h-1zM38 454h1v1h-1zM1249 162h1v1h-1zM596 301h1v1h-1zM596 77h1v1h-1zM1118 558h1v1h-1zM341 388h1v1h-1zM565 508h1v1h-1zM713 337h1v1h-1zM120 638h1v1h-1zM306 281h1v1h-1zM1211 261h1v1h-1zM697 432h1v1h-1zM181 565h1v1h-1zM552 256h1v1h-1zM468 583h1v1h-1zM683 431h1v1h-1zM1046 93h1v1h-1zM798 377h1v1h-1zM21 494h1v1h-1zM539 155h1v1h-1zM1 231h1v1h-1zM1049 629h1v1h-1zM38 587h1v1h-1zM98 422h1v1h-1zM1260 426h1v1h-1zM13 310h1v1h-1zM703 573h1v1h-1zM780 463h1v1h-1zM565 608h1v1h-1zM519 299h1v1h-1zM583 218h1v1h-1zM502 199h1v1h-1zM57 293h1v1h-1zM29 593h1v1h-1zM970 22h1v1h-1zM265 610h1v1h-1zM1083 130h1v1h-1zM125 565h1v1h-1zM665 594h1v1h-1zM298 307h1v1h-1zM28 544h1v1h-1zM784 403h1v1h-1zM551 218h1v1h-1zM146 365h1v1h-1zM381 613h1v1h-1zM722 201h1v1h-1zM61 535h1v1h-1zM689 598h1v1h-1zM240 43h1v1h-1zM21 466h1v1h-1zM1047 381h1v1h-1zM196 425h1v1h-1zM29 380h1v1h-1zM85 636h1v1h-1zM82 324h1v1h-1zM642 151h1v1h-1zM754 390h1v1h-1zM228 335h1v1h-1zM131 218h1v1h-1zM11 473h1v1h-1zM664 107h1v1h-1zM654 34h1v1h-1zM83 105h1v1h-1zM707 232h1v1h-1zM304 248h1v1h-1zM1243 604h1v1h-1zM788 148h1v1h-1zM44 157h1v1h-1zM745 606h1v1h-1zM110 140h1v1h-1zM874 636h1v1h-1zM711 597h1v1h-1zM116 291h1v1h-1zM726 416h1v1h-1zM395 489h1v1h-1zM131 259h1v1h-1zM1357 475h1v1h-1zM698 616h1v1h-1zM27 448h1v1h-1zM259 355h1v1h-1zM30 269h1v1h-1zM569 159h1v1h-1zM81 422h1v1h-1zM716 607h1v1h-1zM1266 230h1v1h-1zM503 115h1v1h-1zM802 48h1v1h-1zM159 474h1v1h-1zM124 434h1v1h-1zM420 620h1v1h-1zM151 444h1v1h-1zM445 154h1v1h-1zM1181 70h1v1h-1z" fill="rgb(140,140,140)"/>
<polyline points="125.0,75.0 99.5,200.6 87.5,248.6 77.2,310.4 74.4,370.0 81.4,454.2 101.0,520.0 125.0,580.0 160.3,641.0" fill="none" stroke="#6a6844" stroke-width="1" stroke-dasharray="3 5"/>
<polyline points="30.0,100.0 15.4,180.0 6.9,231.5 0.0,259.0" fill="none" stroke="#6a6844" stroke-width="1" stroke-dasharray="3 5"/>
<polyline points="0.0,471.0 13.2,520.0 24.2,562.8 39.5,595.8 59.3,641.0" fill="none" stroke="#6a6844" stroke-width="1" stroke-dasharray="3 5"/>
<polyline points="672.4,19.0 694.2,48.0 711.6,85.8 729.0,132.2 740.6,172.8 746.4,205.0 759.5,302.4 760.0,310.0" fill="none" stroke="#6a6844" stroke-width="1" stroke-dasharray="3 5"/>
<polyline points="748.3,459.0 736.4,509.6 703.6,590.0 676.8,641.0" fill="none" stroke="#6a6844" stroke-width="1" stroke-dasharray="3 5"/>
<polyline points="799.0,509.6 775.1,641.0" fill="none" stroke="#6a6844" stroke-width="1" stroke-dasharray="3 5"/>
<circle cx="1040.3" cy="133" r="3.5" fill="#f0d070" shape-rendering="auto"/>
<circle cx="1055.7" cy="222.5" r="2.5" fill="#f0d890" shape-rendering="auto"/>
<path d="M1046 356 L1050 360.6 L1046 365 L1042 360.6 Z" fill="#fffce0" shape-rendering="auto"/>
<circle cx="1226" cy="31.8" r="7.5" fill="none" stroke="#fff" stroke-width="1" shape-rendering="auto"/><path d="M1221 36 L1228 30" stroke="#fff"/>
<circle cx="779.2" cy="271.8" r="5.5" fill="none" stroke="#909090" shape-rendering="auto"/>
<circle cx="796.7" cy="212.3" r="4" fill="none" stroke="#708070" shape-rendering="auto"/>
<path d="M237 84 L251 78 L254 82 M237 84 L241 80 M237 84 L242 86" stroke="#30e030" fill="none"/>
<path d="M227 74 L227 79 M226 82 L228 85 M226 87 L228 91" stroke="#e02020" stroke-width="1.5" fill="none"/>
<path d="M17 615.5 L29 615.5 M17 628.5 L29 628.5" stroke="#b0b0b0"/>
<rect x="13" y="616" width="1" height="1" fill="#ccc"/><rect x="13" y="629" width="1" height="1" fill="#ccc"/>
<circle cx="46.3" cy="301.8" r="2" fill="#fff" shape-rendering="auto"/>
<circle cx="54.9" cy="350.6" r="2" fill="#fff" shape-rendering="auto"/>
<circle cx="29.2" cy="360.9" r="2" fill="#fff" shape-rendering="auto"/>
<circle cx="5.1" cy="243.5" r="1" fill="#fff" shape-rendering="auto"/>
<circle cx="5" cy="324" r="1" fill="#fff" shape-rendering="auto"/>
<circle cx="91" cy="326" r="1" fill="#fff" shape-rendering="auto"/>
<circle cx="207.8" cy="61.1" r="1.5" fill="#fff" shape-rendering="auto"/>
<circle cx="193.8" cy="135.5" r="1" fill="#fff" shape-rendering="auto"/>
<circle cx="141.8" cy="138.8" r="1" fill="#fff" shape-rendering="auto"/>
<circle cx="230.3" cy="155.1" r="1" fill="#fff" shape-rendering="auto"/>
<circle cx="368.1" cy="79.3" r="1" fill="#fff" shape-rendering="auto"/>
<circle cx="316.2" cy="99" r="1" fill="#fff" shape-rendering="auto"/>
<circle cx="428.5" cy="58.3" r="1" fill="#fff" shape-rendering="auto"/>
<circle cx="451" cy="83.5" r="1" fill="#fff" shape-rendering="auto"/>
<circle cx="446.2" cy="96.2" r="1" fill="#fff" shape-rendering="auto"/>
<circle cx="493.1" cy="169.2" r="1" fill="#fff" shape-rendering="auto"/>
<circle cx="800.1" cy="43.7" r="2.5" fill="#fff" shape-rendering="auto"/>
<circle cx="685.5" cy="146.7" r="3" fill="#fff" shape-rendering="auto"/>
<circle cx="1153.7" cy="33.5" r="2" fill="#fff" shape-rendering="auto"/>
<circle cx="1145.6" cy="166.8" r="1.5" fill="#fff" shape-rendering="auto"/>
<circle cx="1197" cy="105.7" r="1" fill="#fff" shape-rendering="auto"/>
<circle cx="263.4" cy="258.2" r="2.5" fill="#fff" shape-rendering="auto"/>
<circle cx="311.1" cy="254.5" r="1" fill="#fff" shape-rendering="auto"/>
<circle cx="346.2" cy="315.2" r="1" fill="#fff" shape-rendering="auto"/>
<circle cx="291.5" cy="342.4" r="1" fill="#fff" shape-rendering="auto"/>
<circle cx="156.7" cy="237.1" r="1" fill="#fff" shape-rendering="auto"/>
<circle cx="197.4" cy="350.3" r="1" fill="#fff" shape-rendering="auto"/>
<circle cx="226.9" cy="360.7" r="1" fill="#fff" shape-rendering="auto"/>
<circle cx="395.4" cy="252.6" r="1" fill="#fff" shape-rendering="auto"/>
<circle cx="410.7" cy="228.6" r="3" fill="#fff" shape-rendering="auto"/>
<circle cx="499.4" cy="204.5" r="1" fill="#fff" shape-rendering="auto"/>
<circle cx="513" cy="234.5" r="1" fill="#fff" shape-rendering="auto"/>
<circle cx="490" cy="252.6" r="1" fill="#fff" shape-rendering="auto"/>
<circle cx="516.3" cy="307.2" r="2.5" fill="#fff" shape-rendering="auto"/>
<circle cx="829.2" cy="636.9" r="2" fill="#fff" shape-rendering="auto"/>
<circle cx="535.1" cy="349.2" r="2.5" fill="#fff" shape-rendering="auto"/>
<circle cx="534" cy="328.8" r="1" fill="#fff" shape-rendering="auto"/>
<circle cx="539.5" cy="374.3" r="1" fill="#fff" shape-rendering="auto"/>
<circle cx="525.3" cy="388.5" r="1.2" fill="#fff" shape-rendering="auto"/>
<circle cx="545.4" cy="418" r="1.2" fill="#fff" shape-rendering="auto"/>
<circle cx="566.8" cy="408.8" r="1.5" fill="#fff" shape-rendering="auto"/>
<circle cx="579.3" cy="320.8" r="1" fill="#fff" shape-rendering="auto"/>
<circle cx="591.9" cy="363.4" r="1" fill="#fff" shape-rendering="auto"/>
<circle cx="48.3" cy="395.3" r="1" fill="#fff" shape-rendering="auto"/>
<circle cx="83.7" cy="414.4" r="1" fill="#fff" shape-rendering="auto"/>
<circle cx="25.3" cy="485.1" r="1" fill="#fff" shape-rendering="auto"/>
<circle cx="46.3" cy="510.4" r="1" fill="#fff" shape-rendering="auto"/>
<circle cx="158.7" cy="445.8" r="1" fill="#fff" shape-rendering="auto"/>
<circle cx="176.9" cy="489.3" r="1" fill="#fff" shape-rendering="auto"/>
<circle cx="227.5" cy="523.9" r="1" fill="#fff" shape-rendering="auto"/>
<circle cx="254.1" cy="539.9" r="1" fill="#fff" shape-rendering="auto"/>
<circle cx="240.1" cy="491.3" r="1" fill="#fff" shape-rendering="auto"/>
<circle cx="255.5" cy="499.2" r="1" fill="#fff" shape-rendering="auto"/>
<circle cx="202.2" cy="400.9" r="1" fill="#fff" shape-rendering="auto"/>
<circle cx="223.3" cy="388.3" r="1" fill="#fff" shape-rendering="auto"/>
<circle cx="193.8" cy="407" r="1" fill="#fff" shape-rendering="auto"/>
<circle cx="147.2" cy="623.2" r="1.5" fill="#fff" shape-rendering="auto"/>
<circle cx="362.7" cy="420.4" r="1" fill="#fff" shape-rendering="auto"/>
<circle cx="397.8" cy="459.7" r="1" fill="#fff" shape-rendering="auto"/>
<circle cx="408.4" cy="555.6" r="2.5" fill="#fff" shape-rendering="auto"/>
<circle cx="426.6" cy="523.8" r="1" fill="#fff" shape-rendering="auto"/>
<circle cx="426.6" cy="546.5" r="1" fill="#fff" shape-rendering="auto"/>
<circle cx="442.5" cy="520.4" r="1" fill="#fff" shape-rendering="auto"/>
<circle cx="467.5" cy="549.5" r="1" fill="#fff" shape-rendering="auto"/>
<circle cx="323.3" cy="613.5" r="1" fill="#fff" shape-rendering="auto"/>
<circle cx="510.6" cy="619.2" r="1" fill="#fff" shape-rendering="auto"/>
<circle cx="367.6" cy="588.5" r="1" fill="#fff" shape-rendering="auto"/>
<circle cx="462.4" cy="461.1" r="1" fill="#fff" shape-rendering="auto"/>
<circle cx="483.4" cy="479.3" r="1" fill="#fff" shape-rendering="auto"/>
<circle cx="514.3" cy="521.5" r="1" fill="#fff" shape-rendering="auto"/>
<circle cx="553.7" cy="527.2" r="1" fill="#fff" shape-rendering="auto"/>
<circle cx="585" cy="540.7" r="1" fill="#fff" shape-rendering="auto"/>
<circle cx="736.9" cy="541.5" r="3" fill="#fff" shape-rendering="auto"/>
<circle cx="704" cy="553.7" r="2" fill="#fff" shape-rendering="auto"/>
<circle cx="750.5" cy="614.1" r="2" fill="#fff" shape-rendering="auto"/>
<circle cx="707.8" cy="585.7" r="1" fill="#fff" shape-rendering="auto"/>
<circle cx="773.7" cy="586.2" r="1" fill="#fff" shape-rendering="auto"/>
<circle cx="593.7" cy="614.1" r="2" fill="#fff" shape-rendering="auto"/>
<circle cx="609.7" cy="602.2" r="2" fill="#fff" shape-rendering="auto"/>
<circle cx="799.9" cy="482.6" r="2" fill="#fff" shape-rendering="auto"/>
<circle cx="781.4" cy="205.8" r="2.5" fill="#fff" shape-rendering="auto"/>
<circle cx="637.2" cy="209.5" r="1.2" fill="#fff" shape-rendering="auto"/>
<circle cx="655.7" cy="202.9" r="1.2" fill="#fff" shape-rendering="auto"/>
<circle cx="642.6" cy="221.5" r="1" fill="#fff" shape-rendering="auto"/>
<circle cx="706" cy="286.6" r="1.2" fill="#fff" shape-rendering="auto"/>
<circle cx="615.3" cy="262" r="1.2" fill="#fff" shape-rendering="auto"/>
<circle cx="756.2" cy="279.4" r="1.2" fill="#fff" shape-rendering="auto"/>
<circle cx="739.6" cy="184.7" r="1" fill="#fff" shape-rendering="auto"/>
<circle cx="721.3" cy="208.4" r="1" fill="#fff" shape-rendering="auto"/>
<circle cx="711.5" cy="213.9" r="1" fill="#fff" shape-rendering="auto"/>
<circle cx="784.2" cy="405" r="1" fill="#fff" shape-rendering="auto"/>
<circle cx="1278.8" cy="532.7" r="3" fill="#fff" shape-rendering="auto"/>
<circle cx="1242.3" cy="572.9" r="1" fill="#fff" shape-rendering="auto"/>
<circle cx="1221.7" cy="621.7" r="1" fill="#fff" shape-rendering="auto"/>
<circle cx="1251.7" cy="448.9" r="1" fill="#fff" shape-rendering="auto"/>
<circle cx="1285.5" cy="457.1" r="1" fill="#fff" shape-rendering="auto"/>
<circle cx="1249.8" cy="510.9" r="1" fill="#fff" shape-rendering="auto"/>
<circle cx="1227.3" cy="499.6" r="1" fill="#fff" shape-rendering="auto"/>
<circle cx="1134.7" cy="390.5" r="1.5" fill="#fff" shape-rendering="auto"/>
<circle cx="1097.6" cy="433.8" r="1" fill="#fff" shape-rendering="auto"/>
<circle cx="1082.6" cy="460.1" r="1" fill="#fff" shape-rendering="auto"/>
<circle cx="1078.9" cy="509" r="1" fill="#fff" shape-rendering="auto"/>
<circle cx="1105.2" cy="504.5" r="1" fill="#fff" shape-rendering="auto"/>
<circle cx="1173.4" cy="206.9" r="1" fill="#fff" shape-rendering="auto"/>
<circle cx="1203.3" cy="230.9" r="1" fill="#fff" shape-rendering="auto"/>
<circle cx="1249.6" cy="309.8" r="1" fill="#fff" shape-rendering="auto"/>
<circle cx="1332" cy="327" r="1" fill="#fff" shape-rendering="auto"/>
<circle cx="1326.8" cy="359.6" r="1" fill="#fff" shape-rendering="auto"/>
<circle cx="1219.5" cy="112.2" r="1" fill="#fff" shape-rendering="auto"/>
<circle cx="1238.8" cy="137.9" r="1" fill="#fff" shape-rendering="auto"/>
<circle cx="1168.1" cy="80" r="1" fill="#fff" shape-rendering="auto"/>
<circle cx="1181" cy="94.5" r="1" fill="#fff" shape-rendering="auto"/>
<circle cx="1131.2" cy="112.2" r="1" fill="#fff" shape-rendering="auto"/>
<circle cx="1120" cy="139.5" r="1" fill="#fff" shape-rendering="auto"/>
<circle cx="1155.3" cy="160.3" r="1" fill="#fff" shape-rendering="auto"/>
<circle cx="1075" cy="25.4" r="1" fill="#fff" shape-rendering="auto"/>
<circle cx="1102.3" cy="30.2" r="1" fill="#fff" shape-rendering="auto"/>
<circle cx="752.2" cy="98.8" r="1" fill="#fff" shape-rendering="auto"/>
<circle cx="781.2" cy="106.1" r="1" fill="#fff" shape-rendering="auto"/>
<circle cx="739.2" cy="80" r="1" fill="#fff" shape-rendering="auto"/>
<circle cx="765.3" cy="149.6" r="1" fill="#fff" shape-rendering="auto"/>
<circle cx="776.9" cy="180.1" r="1.2" fill="#fff" shape-rendering="auto"/>
<circle cx="723.2" cy="49.5" r="1" fill="#fff" shape-rendering="auto"/>
<circle cx="604.2" cy="45.1" r="1" fill="#fff" shape-rendering="auto"/>
<circle cx="549" cy="49.5" r="1" fill="#fff" shape-rendering="auto"/>
<circle cx="579.5" cy="61.1" r="1" fill="#fff" shape-rendering="auto"/>
<circle cx="592.6" cy="103.2" r="1" fill="#fff" shape-rendering="auto"/>
<circle cx="585.3" cy="132.2" r="1" fill="#fff" shape-rendering="auto"/>
<circle cx="608.5" cy="151.1" r="1" fill="#fff" shape-rendering="auto"/>
<circle cx="647.7" cy="143.8" r="1" fill="#fff" shape-rendering="auto"/>
<circle cx="566.4" cy="143.8" r="1" fill="#fff" shape-rendering="auto"/>
<circle cx="534.5" cy="111.9" r="1" fill="#fff" shape-rendering="auto"/>
<circle cx="582.4" cy="171.4" r="1" fill="#fff" shape-rendering="auto"/>
<circle cx="500.1" cy="162.2" r="1" fill="#fff" shape-rendering="auto"/>
<circle cx="515.5" cy="153.7" r="1" fill="#fff" shape-rendering="auto"/>
<circle cx="495.9" cy="180.4" r="1" fill="#fff" shape-rendering="auto"/>
<circle cx="408.1" cy="187.5" r="1" fill="#fff" shape-rendering="auto"/>
<circle cx="460.5" cy="235.5" r="1" fill="#fff" shape-rendering="auto"/>
<circle cx="105" cy="100" r="1" fill="#fff" shape-rendering="auto"/>
<circle cx="132" cy="43" r="1" fill="#fff" shape-rendering="auto"/>
<circle cx="172.1" cy="195" r="1" fill="#fff" shape-rendering="auto"/>
<circle cx="179.7" cy="169" r="1" fill="#fff" shape-rendering="auto"/>
<circle cx="202" cy="96" r="1" fill="#fff" shape-rendering="auto"/></svg><div class="tx" style="left:330.8px;top:72.67px;font-size:11.5px;color:#8c1616;font-style:italic;transform:scaleX(0.99);">Libra</div>
<div class="tx" style="left:419.5px;top:113.87px;font-size:11.5px;color:#8c1616;font-style:italic;transform:scaleX(0.97);">Serpens_Caput</div>
<div class="tx" style="left:482.4px;top:177.67px;font-size:11.5px;color:#8c1616;font-style:italic;transform:scaleX(0.97);">Corona_Borealis</div>
<div class="tx" style="left:778.3px;top:19.37px;font-size:11.5px;color:#8c1616;font-style:italic;transform:scaleX(0.99);">Aquila</div>
<div class="tx" style="left:755.0px;top:74.47px;font-size:11.5px;color:#8c1616;font-style:italic;transform:scaleX(0.99);">Sagitta</div>
<div class="tx" style="left:589.7px;top:127.67px;font-size:11.5px;color:#8c1616;font-style:italic;transform:scaleX(0.99);">Hercules</div>
<div class="tx" style="left:691.3px;top:159.57px;font-size:11.5px;color:#8c1616;font-style:italic;transform:scaleX(0.99);">Lyra</div>
<div class="tx" style="left:782.7px;top:124.77px;font-size:11.5px;color:#8c1616;font-style:italic;transform:scaleX(0.99);">Vulpecula</div>
<div class="tx" style="left:1078.2px;top:101.57px;font-size:11.5px;color:#8c1616;font-style:italic;transform:scaleX(0.97);">Piscis_Austrinus</div>
<div class="tx" style="left:1164.3px;top:78.17px;font-size:11.5px;color:#8c1616;font-style:italic;transform:scaleX(0.99);">Grus</div>
<div class="tx" style="left:1033.9px;top:173.87px;font-size:11.5px;color:#8c1616;font-style:italic;transform:scaleX(0.99);">Aquarius</div>
<div class="tx" style="left:278.8px;top:277.37px;font-size:11.5px;color:#8c1616;font-style:italic;transform:scaleX(0.99);">Virgo</div>
<div class="tx" style="left:350.4px;top:346.17px;font-size:11.5px;color:#8c1616;font-style:italic;transform:scaleX(0.97);">Coma_Berenices</div>
<div class="tx" style="left:88.5px;top:291.87px;font-size:11.5px;color:#8c1616;font-style:italic;transform:scaleX(0.99);">Centaurus</div>
<div class="tx" style="left:29.2px;top:338.07px;font-size:11.5px;color:#8c1616;font-style:italic;transform:scaleX(0.99);">Crux</div>
<div class="tx" style="left:-14.0px;top:356.07px;font-size:11.5px;color:#8c1616;font-style:italic;transform:scaleX(0.99);">Musca</div>
<div class="tx" style="left:457.3px;top:233.87px;font-size:11.5px;color:#8c1616;font-style:italic;transform:scaleX(0.99);">Bootes</div>
<div class="tx" style="left:438.6px;top:338.67px;font-size:11.5px;color:#8c1616;font-style:italic;transform:scaleX(0.97);">Canes_Venatici</div>
<div class="tx" style="left:244.3px;top:495.27px;font-size:11.5px;color:#8c1616;font-style:italic;transform:scaleX(0.99);">Crater</div>
<div class="tx" style="left:201.6px;top:376.47px;font-size:11.5px;color:#8c1616;font-style:italic;transform:scaleX(0.99);">Corvus</div>
<div class="tx" style="left:402.5px;top:512.57px;font-size:11.5px;color:#8c1616;font-style:italic;transform:scaleX(0.99);">Leo</div>
<div class="tx" style="left:448.3px;top:497.67px;font-size:11.5px;color:#8c1616;font-style:italic;transform:scaleX(0.97);">Leo_Minor</div>
<div class="tx" style="left:532.3px;top:443.67px;font-size:11.5px;color:#8c1616;font-style:italic;transform:scaleX(0.97);">Ursa_Major</div>
<div class="tx" style="left:343.8px;top:596.57px;font-size:11.5px;color:#8c1616;font-style:italic;transform:scaleX(0.99);">Sextans</div>
<div class="tx" style="left:520.8px;top:611.37px;font-size:11.5px;color:#8c1616;font-style:italic;transform:scaleX(0.99);">Cancer</div>
<div class="tx" style="left:611.1px;top:536.67px;font-size:11.5px;color:#8c1616;font-style:italic;transform:scaleX(0.99);">Lynx</div>
<div class="tx" style="left:713.6px;top:561.67px;font-size:11.5px;color:#8c1616;font-style:italic;transform:scaleX(0.99);">Auriga</div>
<div class="tx" style="left:606.2px;top:631.07px;font-size:11.5px;color:#8c1616;font-style:italic;transform:scaleX(0.99);">Gemini</div>
<div class="tx" style="left:749.3px;top:221.77px;font-size:11.5px;color:#8c1616;font-style:italic;transform:scaleX(0.99);">Cygnus</div>
<div class="tx" style="left:649.2px;top:266.07px;font-size:11.5px;color:#8c1616;font-style:italic;transform:scaleX(0.99);">Draco</div>
<div class="tx" style="left:775.8px;top:379.27px;font-size:11.5px;color:#8c1616;font-style:italic;transform:scaleX(0.99);">Cassiopeia</div>
<div class="tx" style="left:794.0px;top:498.37px;font-size:11.5px;color:#8c1616;font-style:italic;transform:scaleX(0.99);">Perseus</div>
<div class="tx" style="left:1187.2px;top:364.37px;font-size:11.5px;color:#8c1616;font-style:italic;transform:scaleX(0.99);">Sculptor</div>
<div class="tx" style="left:1242.1px;top:396.27px;font-size:11.5px;color:#8c1616;font-style:italic;transform:scaleX(0.99);">Phoenix</div>
<div class="tx" style="left:1301.1px;top:249.37px;font-size:11.5px;color:#8c1616;font-style:italic;transform:scaleX(0.99);">Tucana</div>
<div class="tx" style="left:1054.4px;top:492.57px;font-size:11.5px;color:#8c1616;font-style:italic;transform:scaleX(0.99);">Cetus</div>
<div class="tx" style="left:296.0px;top:357.69px;font-size:11px;color:#e02020;font-weight:bold;font-style:italic;">W</div>
<div class="tx" style="left:466.0px;top:479.69px;font-size:11px;color:#e02020;font-weight:bold;font-style:italic;">NW</div>
<div class="tx" style="left:674.1px;top:516.79px;font-size:11px;color:#e02020;font-weight:bold;font-style:italic;">N</div>
<div class="tx" style="left:23.0px;top:604.59px;font-size:11px;color:#b0b0b0;">6</div>
<div class="tx" style="left:23.0px;top:617.49px;font-size:11px;color:#b0b0b0;">5</div>
<div class="tx" style="left:23.0px;top:629.99px;font-size:11px;color:#b0b0b0;">4</div>
<div class="tx" style="left:416.4px;top:216.24px;font-size:12px;color:#a8a8a8;text-decoration:underline;">Arcturus</div>
<div class="tx" style="left:691.8px;top:135.64px;font-size:12px;color:#a8a8a8;text-decoration:underline;">Vega</div>
<div class="tx" style="left:741.8px;top:529.04px;font-size:12px;color:#a8a8a8;text-decoration:underline;">Capella</div>
<div class="tx" style="left:1045.4px;top:119.64px;font-size:12px;color:#e8e0b8;text-decoration:underline;">Venus</div>
<div class="tx" style="left:1060.2px;top:209.74px;font-size:12px;color:#e0dcc8;text-decoration:underline;">Mercury</div>
<div class="tx" style="left:1051.3px;top:348.34px;font-size:12px;color:#f0e070;text-decoration:underline;">Sun</div>
<div class="tx" style="left:51.5px;top:271.84px;font-size:12px;color:#20a020;text-decoration:underline;transform:scaleX(0.84);">NGC4755</div>
<div class="tx" style="left:52.0px;top:498.04px;font-size:12px;color:#20a020;text-decoration:underline;transform:scaleX(0.84);">IC2944</div>
<div class="tx" style="left:95.5px;top:578.34px;font-size:12px;color:#20a020;text-decoration:underline;transform:scaleX(0.84);">NGC3532</div>
<div class="tx" style="left:114.2px;top:635.84px;font-size:12px;color:#20a020;text-decoration:underline;transform:scaleX(0.84);">NGC3372</div>
<div class="tx" style="left:523.7px;top:603.34px;font-size:12px;color:#20a020;text-decoration:underline;transform:scaleX(0.84);">M44</div>
<div class="tx" style="left:758.0px;top:65.44px;font-size:12px;color:#20a020;text-decoration:underline;transform:scaleX(0.84);">Coathanger</div>
<div class="tx" style="left:784.7px;top:259.44px;font-size:12px;color:#20a020;text-decoration:underline;transform:scaleX(0.84);">IC1396</div>
<div class="tx" style="left:724.2px;top:343.24px;font-size:12px;color:#94762e;font-style:italic;"> 0  75</div>
<div class="tx" style="left:787.3px;top:335.01px;font-size:12px;color:#94762e;font-style:italic;"> 0  60</div>
<div class="tx" style="left:850.3px;top:326.72px;font-size:12px;color:#94762e;font-style:italic;"> 0  45</div>
<div class="tx" style="left:913.4px;top:318.36px;font-size:12px;color:#94762e;font-style:italic;"> 0  30</div>
<div class="tx" style="left:976.5px;top:309.92px;font-size:12px;color:#94762e;font-style:italic;"> 0  15</div>
<div class="tx" style="left:669.4px;top:414.50px;font-size:12px;color:#94762e;font-style:italic;"> 6  75</div>
<div class="tx" style="left:677.9px;top:477.54px;font-size:12px;color:#94762e;font-style:italic;"> 6  60</div>
<div class="tx" style="left:686.8px;top:540.55px;font-size:12px;color:#94762e;font-style:italic;"> 6  45</div>
<div class="tx" style="left:696.0px;top:603.51px;font-size:12px;color:#94762e;font-style:italic;"> 6  30</div>
<div class="tx" style="left:598.0px;top:359.55px;font-size:12px;color:#94762e;font-style:italic;">12  75</div>
<div class="tx" style="left:534.9px;top:367.62px;font-size:12px;color:#94762e;font-style:italic;">12  60</div>
<div class="tx" style="left:471.8px;top:375.63px;font-size:12px;color:#94762e;font-style:italic;">12  45</div>
<div class="tx" style="left:408.7px;top:383.57px;font-size:12px;color:#94762e;font-style:italic;">12  30</div>
<div class="tx" style="left:345.6px;top:391.43px;font-size:12px;color:#94762e;font-style:italic;">12  15</div>
<div class="tx" style="left:282.4px;top:399.17px;font-size:12px;color:#94762e;font-style:italic;">12  0</div>
<div class="tx" style="left:219.3px;top:406.75px;font-size:12px;color:#94762e;font-style:italic;">12 -15</div>
<div class="tx" style="left:156.1px;top:414.05px;font-size:12px;color:#94762e;font-style:italic;">12 -30</div>
<div class="tx" style="left:92.8px;top:420.83px;font-size:12px;color:#94762e;font-style:italic;">12 -45</div>
<div class="tx" style="left:29.4px;top:426.31px;font-size:12px;color:#94762e;font-style:italic;">12 -60</div>
<div class="tx" style="left:-34.7px;top:426.31px;font-size:12px;color:#94762e;font-style:italic;">12 -75</div>
<div class="tx" style="left:653.1px;top:288.31px;font-size:12px;color:#94762e;font-style:italic;">18  75</div>
<div class="tx" style="left:645.3px;top:225.16px;font-size:12px;color:#94762e;font-style:italic;">18  60</div>
<div class="tx" style="left:637.8px;top:161.98px;font-size:12px;color:#94762e;font-style:italic;">18  45</div>
<div class="tx" style="left:630.7px;top:98.76px;font-size:12px;color:#94762e;font-style:italic;">18  30</div>
<div class="tx" style="left:624.0px;top:35.49px;font-size:12px;color:#94762e;font-style:italic;">18  15</div>
<div class="b" style="left:0px;top:0px;width:1366px;height:18px;background:linear-gradient(90deg,#808080,#c0c0c0)"></div><div class="b" style="left:0px;top:18px;width:1366px;height:1px;background:#e6e4de"></div><svg class="b" style="left:2px;top:1px" width="16" height="16"><rect width="16" height="16" fill="#0000ff"/>
<path d="M3 15 L7 1 M0 6 L10 9 L14 3 M10 9 L12 15" stroke="#20c0c0" stroke-width="1" fill="none"/>
<circle cx="4" cy="3" r="0.8" fill="#fff"/><circle cx="12" cy="6" r="0.8" fill="#fff"/><circle cx="6" cy="11" r="0.8" fill="#fff"/><circle cx="13" cy="13" r="0.8" fill="#fff"/><circle cx="2" cy="8" r="0.7" fill="#fff"/></svg><div class="wb" style="left:1314px;top:2px;width:16px;height:14px"><div class="b" style="left:4px;top:8px;width:6px;height:2px;background:#000"></div></div><div class="wb" style="left:1330px;top:2px;width:16px;height:14px"><div class="b" style="left:5px;top:2px;width:6px;height:6px;border:1px solid #000;border-top-width:2px"></div><div class="b" style="left:2px;top:5px;width:6px;height:6px;border:1px solid #000;border-top-width:2px;background:#d4d0c8"></div></div><div class="wb" style="left:1348px;top:2px;width:16px;height:14px"><svg class="b" style="left:3px;top:2px" width="9" height="8"><path d="M1 0.5 L8 7.5 M8 0.5 L1 7.5" stroke="#000" stroke-width="1.6"/></svg></div><div class="b" style="left:0px;top:19px;width:516px;height:22px;background:#000"></div><div class="b" style="left:0px;top:41px;width:516px;height:1px;background:#6e6e6e"></div><div class="b" style="left:515px;top:19px;width:1px;height:23px;background:#6e6e6e"></div><div class="b" style="left:132px;top:35px;width:4px;height:1px;background:#f2eee2"></div><div class="b" style="left:170px;top:35px;width:8px;height:1px;background:#f2eee2"></div><div class="b" style="left:218px;top:35px;width:7px;height:1px;background:#f2eee2"></div><div class="b" style="left:346px;top:35px;width:7px;height:1px;background:#f2eee2"></div><svg class="b" style="left:0;top:19px" width="516" height="22">
<path d="M5 10 L9 10 L10 11.5 L15 11.5 L15 13 L9 13 L5 20 Z" fill="#a8a8a8"/><path d="M5.5 20.5 L9.5 13.5 L21 13.5 L17 20.5 Z" fill="#a8a8a8"/>
<path d="M14 5 Q18 3 20 7.5" stroke="#a8a8a8" stroke-width="1.2" fill="none"/><path d="M18 7 L20 9 L21.5 6" stroke="#a8a8a8" fill="none"/>
<path d="M52 20 L52.5 12 L55 8 L55 4 L58 4 L58.5 9 L60.5 9 L61 4 L64 4 L64 8 L66.5 12 L67 20 L61 20 L60.5 15 L58.5 15 L58 20 Z" fill="#a8a8a8"/>
<circle cx="125" cy="9" r="5" fill="#a8a8a8"/><path d="M121 13 L115 20" stroke="#a8a8a8" stroke-width="1.6"/><path d="M122 9 L128 9 M125 6 L125 12" stroke="#555" stroke-width="1.6"/>
<circle cx="163" cy="9" r="5" fill="#a8a8a8"/><path d="M159 13 L153 20" stroke="#a8a8a8" stroke-width="1.6"/><path d="M160 9 L166 9" stroke="#555" stroke-width="1.6"/>
<path d="M204 8 L212 8 Q215 8 215 12 Q215 16 211 16 L205 16 M204 8 L207 5 M204 8 L207 11" stroke="#a8a8a8" stroke-width="1.5" fill="none"/>
<rect x="257.5" y="3.5" width="15" height="12" fill="#8c8c8c" stroke="#a8a8a8" stroke-width="1.5"/><rect x="259" y="5" width="12" height="9" fill="#c8c8c8"/><path d="M265 16 L265 19 M260 19.5 L270 19.5" stroke="#a8a8a8" stroke-width="1.5"/>
<path d="M322 6 L333 17" stroke="#a8a8a8" stroke-width="2"/><g fill="#ddd"><circle cx="321" cy="4" r=".8"/><circle cx="326" cy="3" r=".8"/><circle cx="333" cy="4" r=".8"/><circle cx="336" cy="9" r=".8"/><circle cx="320" cy="13" r=".8"/><circle cx="326" cy="19" r=".8"/><circle cx="335" cy="18" r=".8"/><circle cx="330" cy="10" r=".6"/></g>
<rect x="387.5" y="3.5" width="12" height="14" fill="none" stroke="#a8a8a8" stroke-width="1"/><rect x="390.5" y="6.5" width="11" height="13" fill="#111" stroke="#a8a8a8" stroke-width="1.2"/><path d="M393 10 L399 10 L395 17" stroke="#a8a8a8" stroke-width="1.5" fill="none"/>
<path d="M441 8 Q441 4 445.5 4 Q450 4 450 8 Q450 10 446 12 L446 15" stroke="#a8a8a8" stroke-width="1.6" fill="none"/><rect x="445" y="17" width="2" height="2" fill="#a8a8a8"/>
<rect x="487" y="2" width="2" height="20" fill="#e8e8e8"/>
<path d="M500 9.5 L511 9.5" stroke="#a8a8a8" stroke-width="1"/><path d="M501 12 L510 12 L505.5 16 Z" fill="#a8a8a8"/>
</svg><svg class="b" style="left:8px;top:149px" width="64" height="13"><path d="M7.5 1.5 L7.5 11 M3 6.5 L7.5 11 L12 6.5 M55 12 L55 2 M50.5 6.5 L55 2 L59.5 6.5" stroke="#eee6c0" stroke-width="1.2" fill="none"/></svg><div class="b" style="left:809px;top:56px;width:222px;height:576px;background:#d4d0c8;border:1px solid;border-color:#d4d0c8 #404040 #404040 #d4d0c8;box-shadow:inset 1px 1px 0 #fff,inset -1px -1px 0 #808080"></div><div class="b" style="left:813px;top:60px;width:214px;height:568px;background:#000"></div><div class="b" style="left:813px;top:60px;width:214px;height:18px;background:linear-gradient(90deg,#0a246a,#a6caf0)"></div><svg class="b" style="left:815px;top:61px" width="16" height="16"><rect x="0.5" y="0.5" width="15" height="15" fill="#0a2a6a" stroke="#6a7a8a"/>
<path d="M4 3 L4 13 L11 13 M4 3 L11 3 M4 8 L10 8" stroke="#e8e860" stroke-width="1.2" fill="none"/>
<g fill="#fff"><circle cx="4" cy="3" r="1.3"/><circle cx="11" cy="3" r="1.3"/><circle cx="4" cy="8" r="1.3"/><circle cx="10" cy="8" r="1.3"/><circle cx="4" cy="13" r="1.3"/><circle cx="11" cy="13" r="1.3"/></g></svg><div class="wb" style="left:975px;top:62px;width:16px;height:14px"><div class="b" style="left:4px;top:8px;width:6px;height:2px;background:#000"></div></div><div class="wb" style="left:991px;top:62px;width:16px;height:14px"><div class="b" style="left:3px;top:1px;width:9px;height:9px;border:1px solid #000;border-top-width:2px"></div></div><div class="wb" style="left:1009px;top:62px;width:16px;height:14px"><svg class="b" style="left:3px;top:2px" width="9" height="8"><path d="M1 0.5 L8 7.5 M8 0.5 L1 7.5" stroke="#808080" stroke-width="1.6"/></svg></div><svg class="b" style="left:821px;top:84px" width="48" height="48"><rect x="0.5" y="0.5" width="47" height="47" fill="#0a2060" stroke="#7a7a50"/>
<path d="M14 6.5 L14 31.5 L32 31.5 M14 6.5 L32.7 5.9 M14 20.9 L26.7 19.6" stroke="#f0f060" stroke-width="1.4" fill="none"/>
<g fill="#fff"><circle cx="14" cy="6.5" r="2.4"/><circle cx="32.7" cy="5.9" r="2.4"/><circle cx="14" cy="20.9" r="2.2"/><circle cx="26.7" cy="19.6" r="2.2"/><circle cx="14" cy="31.5" r="2.2"/><circle cx="32" cy="31.5" r="2.2"/></g></svg><div class="b" style="left:877px;top:84px;width:137px;height:44px;background:#800000"></div><div class="b" style="left:821px;top:135px;width:49px;height:19px;background:#d5caa2;border:1px solid;border-color:#fff #707070 #707070 #fff;"></div><svg class="b" style="left:821px;top:135px" width="49" height="19"><path d="M9.5 7 L17 5.5 L17 13 L9.5 14.5 Z" fill="#6aa8e8" stroke="#2050b0"/>
<path d="M23 9.5 L35 9.5 M29 3.5 L29 15.5" stroke="#10c010" stroke-width="3.2"/></svg><div class="b" style="left:965px;top:135px;width:49px;height:19px;background:#d5caa2;border:1px solid;border-color:#fff #707070 #707070 #fff;"></div><svg class="b" style="left:965px;top:135px" width="49" height="19"><path d="M7 16 L15 8" stroke="#888" stroke-width="2.5"/><path d="M14 4 A4 4 0 1 0 19 9" stroke="#888" stroke-width="2" fill="none"/>
<path d="M20 10 L24 13 L20 16 M26 10 L30 13 L26 16 M32 10 L36 13 L32 16" stroke="#e01010" stroke-width="2" fill="none"/></svg><div class="b" style="left:822px;top:163px;width:192px;height:151px;border:1px solid #fff"></div><div class="b" style="left:827px;top:157px;width:88px;height:10px;background:#000"></div><div class="b" style="left:822px;top:324px;width:192px;height:166px;border:1px solid #fff"></div><div class="b" style="left:827px;top:318px;width:82px;height:10px;background:#000"></div><div class="b" style="left:822px;top:502px;width:192px;height:70px;border:1px solid #fff"></div><div class="b" style="left:827px;top:496px;width:137px;height:10px;background:#000"></div><div class="b" style="left:822px;top:583px;width:192px;height:32px;border:1px solid #fff"></div><div class="b" style="left:827px;top:577px;width:140px;height:10px;background:#000"></div><div class="b" style="left:829px;top:170px;width:65px;height:22px;background:#3a0000"></div><div class="b" style="left:901px;top:170px;width:105px;height:22px;background:#7e0000"></div><div class="b" style="left:829px;top:194px;width:65px;height:22px;background:#3a0000"></div><div class="b" style="left:901px;top:194px;width:105px;height:22px;background:#7e0000"></div><div class="b" style="left:829px;top:218px;width:65px;height:22px;background:#3a0000"></div><div class="b" style="left:901px;top:218px;width:105px;height:22px;background:#7e0000"></div><div class="b" style="left:829px;top:242px;width:65px;height:22px;background:#3a0000"></div><div class="b" style="left:901px;top:242px;width:105px;height:22px;background:#7e0000"></div><div class="b" style="left:829px;top:266px;width:65px;height:22px;background:#3a0000"></div><div class="b" style="left:901px;top:266px;width:105px;height:22px;background:#7e0000"></div><div class="b" style="left:829px;top:290px;width:65px;height:17px;background:#3a0000"></div><div class="b" style="left:901px;top:290px;width:105px;height:17px;background:#7e0000"></div><div class="b" style="left:861px;top:332px;width:32px;height:32px;background:#d5caa2;border:1px solid;border-color:#fff #707070 #707070 #fff;border-color:#fff #606060 #606060 #fff"></div><div class="b" style="left:829px;top:364px;width:32px;height:32px;background:#d5caa2;border:1px solid;border-color:#fff #707070 #707070 #fff;border-color:#fff #606060 #606060 #fff"></div><div class="b" style="left:861px;top:364px;width:32px;height:32px;background:#d5caa2;border:1px solid;border-color:#fff #707070 #707070 #fff;border-color:#fff #606060 #606060 #fff"></div><div class="b" style="left:893px;top:364px;width:33px;height:32px;background:#d5caa2;border:1px solid;border-color:#fff #707070 #707070 #fff;border-color:#fff #606060 #606060 #fff"></div><div class="b" style="left:861px;top:396px;width:32px;height:32px;background:#d5caa2;border:1px solid;border-color:#fff #707070 #707070 #fff;border-color:#fff #606060 #606060 #fff"></div><div class="b" style="left:829px;top:409px;width:25px;height:19px;background:#d5caa2;border:1px solid;border-color:#fff #707070 #707070 #fff;border-color:#fff #606060 #606060 #fff"></div><svg class="b" style="left:861px;top:364px" width="32" height="32"><g transform="translate(16.3 15.5)"><path d="M-3.3 -8 L3.3 -8 L8 -3.3 L8 3.3 L3.3 8 L-3.3 8 L-8 3.3 L-8 -3.3 Z" fill="#c00010" stroke="#600" stroke-width="0.8"/>
<text x="0" y="2.4" font-family="Liberation Sans" font-weight="bold" font-size="6.6" fill="#fff" text-anchor="middle">STOP</text></g></svg><div class="b" style="left:933px;top:348px;width:12px;height:81px;background:#fff"></div><div class="wb" style="left:933px;top:348px;width:12px;height:15px"></div><svg class="b" style="left:933px;top:348px" width="12" height="15"><path d="M3 9 L9 9 L6 6 Z" fill="#000"/></svg><div class="wb" style="left:933px;top:414px;width:12px;height:15px"></div><svg class="b" style="left:933px;top:414px" width="12" height="15"><path d="M3 6 L9 6 L6 9 Z" fill="#000"/></svg><div class="wb" style="left:933px;top:364px;width:12px;height:8px"></div><div class="b" style="left:989px;top:348px;width:12px;height:81px;background:#fff"></div><div class="wb" style="left:989px;top:348px;width:12px;height:15px"></div><svg class="b" style="left:989px;top:348px" width="12" height="15"><path d="M3 9 L9 9 L6 6 Z" fill="#000"/></svg><div class="wb" style="left:989px;top:414px;width:12px;height:15px"></div><svg class="b" style="left:989px;top:414px" width="12" height="15"><path d="M3 6 L9 6 L6 9 Z" fill="#000"/></svg><div class="wb" style="left:989px;top:364px;width:12px;height:8px"></div><div class="b" style="left:906px;top:412px;width:25px;height:17px;background:#3a0000"></div><div class="b" style="left:962px;top:412px;width:25px;height:17px;background:#3a0000"></div><div class="b" style="left:948px;top:372px;width:37px;height:23px;background:#d4d0c8;border:1px solid;border-color:#808080 #fff #fff #808080;box-shadow:inset 1px 1px 0 #404040"></div><div class="b" style="left:950px;top:374px;width:17px;height:19px;background:#0a246a;outline:1px dotted #fff;outline-offset:-2px;border:1px solid #c04040"></div><div class="wb" style="left:967px;top:374px;width:16px;height:19px"></div><svg class="b" style="left:967px;top:374px" width="16" height="19"><path d="M4 8 L12 8 L8 12 Z" fill="#000"/></svg><div class="b" style="left:829px;top:442px;width:13px;height:13px;background:#fff;border:1px solid;border-color:#808080 #d4d0c8 #d4d0c8 #808080;box-shadow:inset 1px 1px 0 #404040"></div><div class="b" style="left:917px;top:442px;width:13px;height:13px;background:#fff;border:1px solid;border-color:#808080 #d4d0c8 #d4d0c8 #808080;box-shadow:inset 1px 1px 0 #404040"></div><svg class="b" style="left:917px;top:442px" width="13" height="13"><path d="M3 6 L5.5 9 L10 3.5" stroke="#000" stroke-width="2" fill="none"/></svg><div class="b" style="left:829px;top:460px;width:25px;height:25px;background:#d5caa2;border:1px solid;border-color:#fff #707070 #707070 #fff;"></div><div class="b" style="left:861px;top:460px;width:25px;height:25px;background:#d5caa2;border:1px solid;border-color:#fff #707070 #707070 #fff;"></div><div class="b" style="left:893px;top:460px;width:25px;height:25px;background:#d5caa2;border:1px solid;border-color:#fff #707070 #707070 #fff;"></div><svg class="b" style="left:829px;top:460px" width="25" height="25"><g fill="#606060"><rect x="6" y="7" width="5" height="12" rx="2"/><rect x="14" y="7" width="5" height="12" rx="2"/><rect x="10" y="10" width="5" height="4"/></g><g fill="#a0a0a0"><rect x="7" y="8" width="2" height="9"/><rect x="15" y="8" width="2" height="9"/></g></svg><svg class="b" style="left:861px;top:460px" width="25" height="25"><rect x="6.5" y="6.5" width="12" height="12" fill="none" stroke="#fff" stroke-width="1.5"/><path d="M12.5 6.5 L12.5 18.5 M6.5 12.5 L18.5 12.5" stroke="#fff" stroke-width="1.5"/></svg><svg class="b" style="left:893px;top:460px" width="25" height="25"><path d="M19 5 L5 5 L5 20 L20 20 L20 9 L9 9 L9 16 L16 16 L16 12 L12 12" stroke="#fff" stroke-width="1.8" fill="none"/></svg><div class="b" style="left:965px;top:461px;width:41px;height:14px;background:#3a0000"></div><div class="b" style="left:925px;top:476px;width:81px;height:10px;background:#fff"></div><div class="wb" style="left:925px;top:476px;width:16px;height:10px"></div><div class="wb" style="left:990px;top:476px;width:16px;height:10px"></div><div class="wb" style="left:962px;top:476px;width:7px;height:10px"></div><svg class="b" style="left:925px;top:476px" width="81" height="10"><path d="M9 2.5 L9 7.5 L6.5 5 Z M72 2.5 L72 7.5 L74.5 5 Z" fill="#000"/></svg><div class="b" style="left:829px;top:510px;width:25px;height:25px;background:#d5caa2;border:1px solid;border-color:#fff #707070 #707070 #fff;"></div><div class="b" style="left:867px;top:510px;width:25px;height:25px;background:#d5caa2;border:1px solid;border-color:#fff #707070 #707070 #fff;"></div><div class="b" style="left:905px;top:510px;width:25px;height:25px;background:#d5caa2;border:1px solid;border-color:#fff #707070 #707070 #fff;"></div><div class="b" style="left:943px;top:510px;width:25px;height:25px;background:#d5caa2;border:1px solid;border-color:#fff #707070 #707070 #fff;"></div><div class="b" style="left:981px;top:510px;width:25px;height:25px;background:#d5caa2;border:1px solid;border-color:#fff #707070 #707070 #fff;"></div><svg class="b" style="left:829px;top:510px" width="25" height="25"><g transform="translate(12.5 12)"><path d="M-3.3 -8 L3.3 -8 L8 -3.3 L8 3.3 L3.3 8 L-3.3 8 L-8 3.3 L-8 -3.3 Z" fill="#c00010" stroke="#600" stroke-width="0.8"/>
<text x="0" y="2.4" font-family="Liberation Sans" font-weight="bold" font-size="6.6" fill="#fff" text-anchor="middle">STOP</text></g></svg><svg class="b" style="left:867px;top:510px" width="25" height="25"><path d="M12.5 3.5 L14.8 9.8 L21.5 9.8 L16.1 13.8 L18.2 20.5 L12.5 16.4 L6.8 20.5 L8.9 13.8 L3.5 9.8 L10.2 9.8 Z" fill="#fff"/></svg><svg class="b" style="left:905px;top:510px" width="25" height="25"><path d="M15 4 A8.5 8.5 0 1 0 17 20 A7 7 0 0 1 15 4 Z" fill="#fff"/></svg><svg class="b" style="left:943px;top:510px" width="25" height="25"><path d="M12.5 3 L14.2 7.5 L18.5 5.5 L17 10 L21.5 11.8 L17.2 14 L19 18.5 L14.5 17 L12.5 21.5 L10.5 17 L6 18.5 L7.8 14 L3.5 11.8 L8 10 L6.5 5.5 L10.8 7.5 Z" fill="#f8f800"/></svg><svg class="b" style="left:981px;top:510px" width="25" height="25"><path d="M5 4 L17 15" stroke="#fff" stroke-width="3" opacity="0.7"/><circle cx="17.5" cy="16.5" r="3.5" fill="#fff"/></svg><div class="b" style="left:853px;top:542px;width:55px;height:21px;background:#800000;border:2px solid;border-color:#707070 #fff #fff #707070;overflow:hidden"></div><div class="b" style="left:949px;top:542px;width:56px;height:21px;background:#800000;border:2px solid;border-color:#707070 #fff #fff #707070;overflow:hidden"></div><div class="b" style="left:855px;top:544px;width:51px;height:17px;overflow:hidden"><div class="tx" style="left:1.6px;top:1.44px;font-size:12px;color:#f09030;transform:scaleX(0.95)">15.041067</div></div><div class="b" style="left:829px;top:591px;width:177px;height:20px;background:#d5caa2;border:1px solid;border-color:#fff #707070 #707070 #fff;border-color:#fff #606060 #606060 #fff"></div><div class="b" style="left:600px;top:308px;width:166px;height:151px;background:#d4d0c8;border:1px solid;border-color:#d4d0c8 #404040 #404040 #d4d0c8;box-shadow:inset 1px 1px 0 #fff,inset -1px -1px 0 #808080"></div><div class="b" style="left:603px;top:311px;width:160px;height:18px;background:linear-gradient(90deg,#808080,#c0c0c0)"></div><div class="wb" style="left:745px;top:313px;width:16px;height:14px"><svg class="b" style="left:3px;top:2px" width="9" height="8"><path d="M1 0.5 L8 7.5 M8 0.5 L1 7.5" stroke="#000" stroke-width="1.6"/></svg></div><div class="b" style="left:645px;top:420px;width:75px;height:26px;border:1px solid #000"></div><div class="b" style="left:646px;top:421px;width:73px;height:24px;background:#d4d0c8;border:1px solid;border-color:#fff #404040 #404040 #fff;box-shadow:inset -1px -1px 0 #808080"></div><svg class="b" style="left:660px;top:424px" width="20" height="18"><path d="M5.5 9 L9.5 13 L17 5.5" stroke="#50b040" stroke-width="3" fill="none"/></svg><svg class="b" style="left:744px;top:435px" width="16" height="24"><path d="M1.5 1.5 L1.5 17 L5 13.5 L8 20.5 L10.5 19.5 L7.5 12.5 L12 12.5 Z" fill="#fff" stroke="#000" stroke-width="1"/></svg>
<div class="tx" style="left:21.0px;top:2.00px;font-size:13px;color:#e6e2d6;font-weight:bold;transform:scaleX(1.034);">Hallo northern sky</div>
<div class="tx" style="left:155.2px;top:2.00px;font-size:13px;color:#e6e2d6;font-weight:bold;transform:scaleX(1.063);">2019-03-29</div>
<div class="tx" style="left:236.0px;top:2.00px;font-size:13px;color:#e6e2d6;font-weight:bold;transform:scaleX(0.990);">06:41:52</div>
<div class="tx" style="left:307.3px;top:2.00px;font-size:13px;color:#e6e2d6;font-weight:bold;transform:scaleX(1.057);">terrestrial view</div>
<div class="tx" style="left:425.5px;top:2.00px;font-size:13px;color:#e6e2d6;font-weight:bold;transform:scaleX(1.070);">refresh rate is 60,</div>
<div class="tx" style="left:557.5px;top:2.00px;font-size:13px;color:#e6e2d6;font-weight:bold;transform:scaleX(1.038);">TYC</div>
<div class="tx" style="left:23.3px;top:24.67px;font-size:11.5px;color:#f2eee2;transform:scaleX(1.106);">File</div>
<div class="tx" style="left:70.0px;top:24.67px;font-size:11.5px;color:#f2eee2;transform:scaleX(0.966);">Search</div>
<div class="tx" style="left:132.2px;top:24.67px;font-size:11.5px;color:#f2eee2;transform:scaleX(0.983);">IN</div>
<div class="tx" style="left:170.0px;top:24.67px;font-size:11.5px;color:#f2eee2;transform:scaleX(0.906);">OUT</div>
<div class="tx" style="left:218.3px;top:24.67px;font-size:11.5px;color:#f2eee2;transform:scaleX(0.790);">RESET</div>
<div class="tx" style="left:275.5px;top:24.67px;font-size:11.5px;color:#f2eee2;transform:scaleX(0.955);">Screen</div>
<div class="tx" style="left:337.3px;top:24.67px;font-size:11.5px;color:#f2eee2;transform:scaleX(0.993);">Objects</div>
<div class="tx" style="left:403.6px;top:24.67px;font-size:11.5px;color:#f2eee2;transform:scaleX(1.017);">Date</div>
<div class="tx" style="left:455.8px;top:24.67px;font-size:11.5px;color:#f2eee2;transform:scaleX(1.044);">Help</div>
<div class="tx" style="left:10.4px;top:47.69px;font-size:11px;color:#f6f4ec;">Field:</div>
<div class="tx" style="left:10.4px;top:64.69px;font-size:11px;color:#f6f4ec;">α:</div>
<div class="tx" style="left:10.4px;top:81.69px;font-size:11px;color:#f6f4ec;">δ:</div>
<div class="tx" style="left:10.4px;top:98.69px;font-size:11px;color:#eee6c0;">TYC:</div>
<div class="tx" style="left:10.4px;top:115.69px;font-size:11px;color:#eee6c0;">Magn.:</div>
<div class="tx" style="left:10.4px;top:132.69px;font-size:11px;color:#eee6c0;">Name:</div>
<div class="tx" style="left:50.3px;top:47.69px;font-size:11px;color:#f6f4ec;transform:scaleX(0.937);">322</div>
<div class="tx" style="left:74.7px;top:47.69px;font-size:11px;color:#f6f4ec;">x</div>
<div class="tx" style="left:88.4px;top:47.69px;font-size:11px;color:#f6f4ec;transform:scaleX(0.959);">162</div>
<div class="tx" style="left:109.5px;top:47.53px;font-size:10px;color:#f6f4ec;">°</div>
<div class="tx" style="left:56.0px;top:64.69px;font-size:11px;color:#eee6c0;transform:scaleX(0.962);">20:41 25.9</div>
<div class="tx" style="left:52.0px;top:81.69px;font-size:11px;color:#eee6c0;transform:scaleX(0.975);">+45d 16 49</div>
<div class="tx" style="left:55.0px;top:98.69px;font-size:11px;color:#eee6c0;transform:scaleX(0.969);">3574-3347</div>
<div class="tx" style="left:90.7px;top:115.69px;font-size:11px;color:#eee6c0;">1.3</div>
<div class="tx" style="left:71.0px;top:132.69px;font-size:11px;color:#eee6c0;transform:scaleX(1.080);">Deneb</div>
<div class="tx" style="left:24.4px;top:149.69px;font-size:11px;color:#eee6c0;transform:scaleX(0.974);">18:09</div>
<div class="tx" style="left:71.2px;top:149.69px;font-size:11px;color:#eee6c0;transform:scaleX(0.974);">23:26</div>
<div class="tx" style="left:10.4px;top:166.69px;font-size:11px;color:#eee6c0;transform:scaleX(1.149);">Meridian:</div>
<div class="tx" style="left:70.0px;top:166.69px;font-size:11px;color:#eee6c0;">≈</div>
<div class="tx" style="left:78.0px;top:166.69px;font-size:11px;color:#eee6c0;">08:45</div>
<div class="tx" style="left:147.8px;top:47.69px;font-size:11px;color:#f6f4ec;">A:</div>
<div class="tx" style="left:194.6px;top:47.69px;font-size:11px;color:#f6f4ec;">N</div>
<div class="tx" style="left:238.0px;top:47.69px;font-size:11px;color:#f6f4ec;">h:</div>
<div class="tx" style="left:279.2px;top:47.69px;font-size:11px;color:#f6f4ec;">37</div>
<div class="tx" style="left:151.0px;top:64.69px;font-size:11px;color:#f6f4ec;transform:scaleX(0.981);">23: 56.4</div>
<div class="tx" style="left:149.8px;top:81.69px;font-size:11px;color:#f6f4ec;">+89d 33</div>
<div class="tx" style="left:1272.0px;top:24.69px;font-size:11px;color:#f0f2f6;transform:scaleX(0.968);">2019-03-29  06:41</div>
<div class="tx" style="left:833.6px;top:61.50px;font-size:13px;color:#ffffff;font-weight:bold;transform:scaleX(1.046);">EQMOD HEQ5/6</div>
<div class="tx" style="left:827.5px;top:119.78px;font-size:9px;color:#ffffff;font-weight:bold;transform:scaleX(1.029);">EQMOD</div>
<div class="tx" style="left:878.0px;top:87.70px;font-size:13px;color:#ff1010;transform:scaleX(1.074);">EQMOD HEQ5/6</div>
<div class="tx" style="left:878.0px;top:106.40px;font-size:13px;color:#ff1010;transform:scaleX(1.122);">V2.00k</div>
<div class="tx" style="left:830.6px;top:155.69px;font-size:11px;color:#e0902e;font-weight:bold;transform:scaleX(1.032);">Mount Position</div>
<div class="tx" style="left:831.4px;top:317.69px;font-size:11px;color:#e0902e;font-weight:bold;transform:scaleX(1.036);">Slew Controls</div>
<div class="tx" style="left:830.2px;top:495.69px;font-size:11px;color:#e0902e;font-weight:bold;transform:scaleX(1.016);">Track Rate: Not Tracking</div>
<div class="tx" style="left:831.0px;top:576.49px;font-size:11px;color:#e0902e;font-weight:bold;transform:scaleX(0.963);">Park Status: NOT PARKED</div>
<div class="tx" style="left:830.1px;top:171.72px;font-size:19px;color:#ff1010;font-weight:bold;">LST</div>
<div class="tx" style="left:902.5px;top:171.72px;font-size:19px;color:#ff1010;font-weight:bold;transform:scaleX(1.026);">18:33:47</div>
<div class="tx" style="left:830.1px;top:195.72px;font-size:19px;color:#ff1010;font-weight:bold;">RA</div>
<div class="tx" style="left:902.5px;top:195.72px;font-size:19px;color:#ff1010;font-weight:bold;transform:scaleX(1.086);">00:33:47</div>
<div class="tx" style="left:830.1px;top:219.72px;font-size:19px;color:#ff1010;font-weight:bold;">DEC</div>
<div class="tx" style="left:902.5px;top:219.72px;font-size:19px;color:#ff1010;font-weight:bold;transform:scaleX(1.102);">+90:00:00</div>
<div class="tx" style="left:830.1px;top:243.72px;font-size:19px;color:#ff1010;font-weight:bold;">AZ</div>
<div class="tx" style="left:902.5px;top:243.72px;font-size:19px;color:#ff1010;font-weight:bold;transform:scaleX(1.086);">00:00:00</div>
<div class="tx" style="left:830.1px;top:267.72px;font-size:19px;color:#ff1010;font-weight:bold;">ALT</div>
<div class="tx" style="left:902.5px;top:267.72px;font-size:19px;color:#ff1010;font-weight:bold;transform:scaleX(1.086);">37:33:59</div>
<div class="tx" style="left:829.4px;top:292.77px;font-size:11.5px;color:#ff1010;font-weight:bold;transform:scaleX(0.947);">PierSide</div>
<div class="tx" style="left:901.8px;top:293.19px;font-size:11px;color:#ff1010;font-weight:bold;transform:scaleX(0.868);">East, pointing West</div>
<div class="tx" style="left:868.8px;top:334.62px;font-size:27.5px;color:#000;font-weight:bold;transform:scaleX(0.836);">N</div>
<div class="tx" style="left:833.4px;top:366.92px;font-size:27.5px;color:#000;font-weight:bold;transform:scaleX(0.952);">W</div>
<div class="tx" style="left:902.0px;top:366.92px;font-size:27.5px;color:#000;font-weight:bold;transform:scaleX(0.829);">E</div>
<div class="tx" style="left:869.0px;top:398.72px;font-size:27.5px;color:#000;font-weight:bold;transform:scaleX(0.883);">S</div>
<div class="tx" style="left:834.0px;top:415.73px;font-size:8px;color:#000;transform:scaleX(0.984);">Pad</div>
<div class="tx" style="left:915.5px;top:333.69px;font-size:11px;color:#e0902e;transform:scaleX(0.825);">RA Rate</div>
<div class="tx" style="left:965.0px;top:333.69px;font-size:11px;color:#e0902e;transform:scaleX(0.820);">DEC Rate</div>
<div class="tx" style="left:924.9px;top:415.69px;font-size:11px;color:#d01010;">1</div>
<div class="tx" style="left:980.9px;top:415.69px;font-size:11px;color:#d01010;">1</div>
<div class="tx" style="left:953.0px;top:379.69px;font-size:11px;color:#b0c0e0;">1</div>
<div class="tx" style="left:846.4px;top:442.39px;font-size:11px;color:#e0902e;transform:scaleX(0.869);">RA Reverse</div>
<div class="tx" style="left:934.0px;top:442.39px;font-size:11px;color:#e0902e;transform:scaleX(0.863);">DEC Reverse</div>
<div class="tx" style="left:981.5px;top:463.69px;font-size:11px;color:#d01010;">2000</div>
<div class="tx" style="left:829.6px;top:544.84px;font-size:12px;color:#e0902e;transform:scaleX(0.828);">RA</div>
<div class="tx" style="left:917.4px;top:544.84px;font-size:12px;color:#e0902e;transform:scaleX(0.766);">DEC</div>
<div class="tx" style="left:952.5px;top:545.44px;font-size:12px;color:#f09030;">0</div>
<div class="tx" style="left:862.4px;top:596.39px;font-size:11px;color:#000;font-weight:bold;transform:scaleX(0.880);">PARK to Home Position</div>
<div class="tx" style="left:605.8px;top:312.70px;font-size:13px;color:#d4d0c8;font-weight:bold;transform:scaleX(0.923);">HNSKY</div>
<div class="tx" style="left:613.7px;top:338.70px;font-size:13px;color:#000;transform:scaleX(0.928);">EQMOD ASCOM Driver</div>
<div class="tx" style="left:613.7px;top:362.70px;font-size:13px;color:#000;transform:scaleX(0.923);">EQASCOM V2,00k</div>
<div class="tx" style="left:613.5px;top:386.60px;font-size:13px;color:#000;transform:scaleX(0.881);">USITG</div>
<div class="tx" style="left:684.5px;top:426.70px;font-size:13px;color:#000;transform:scaleX(0.878);">OK</div>
</body></html>
